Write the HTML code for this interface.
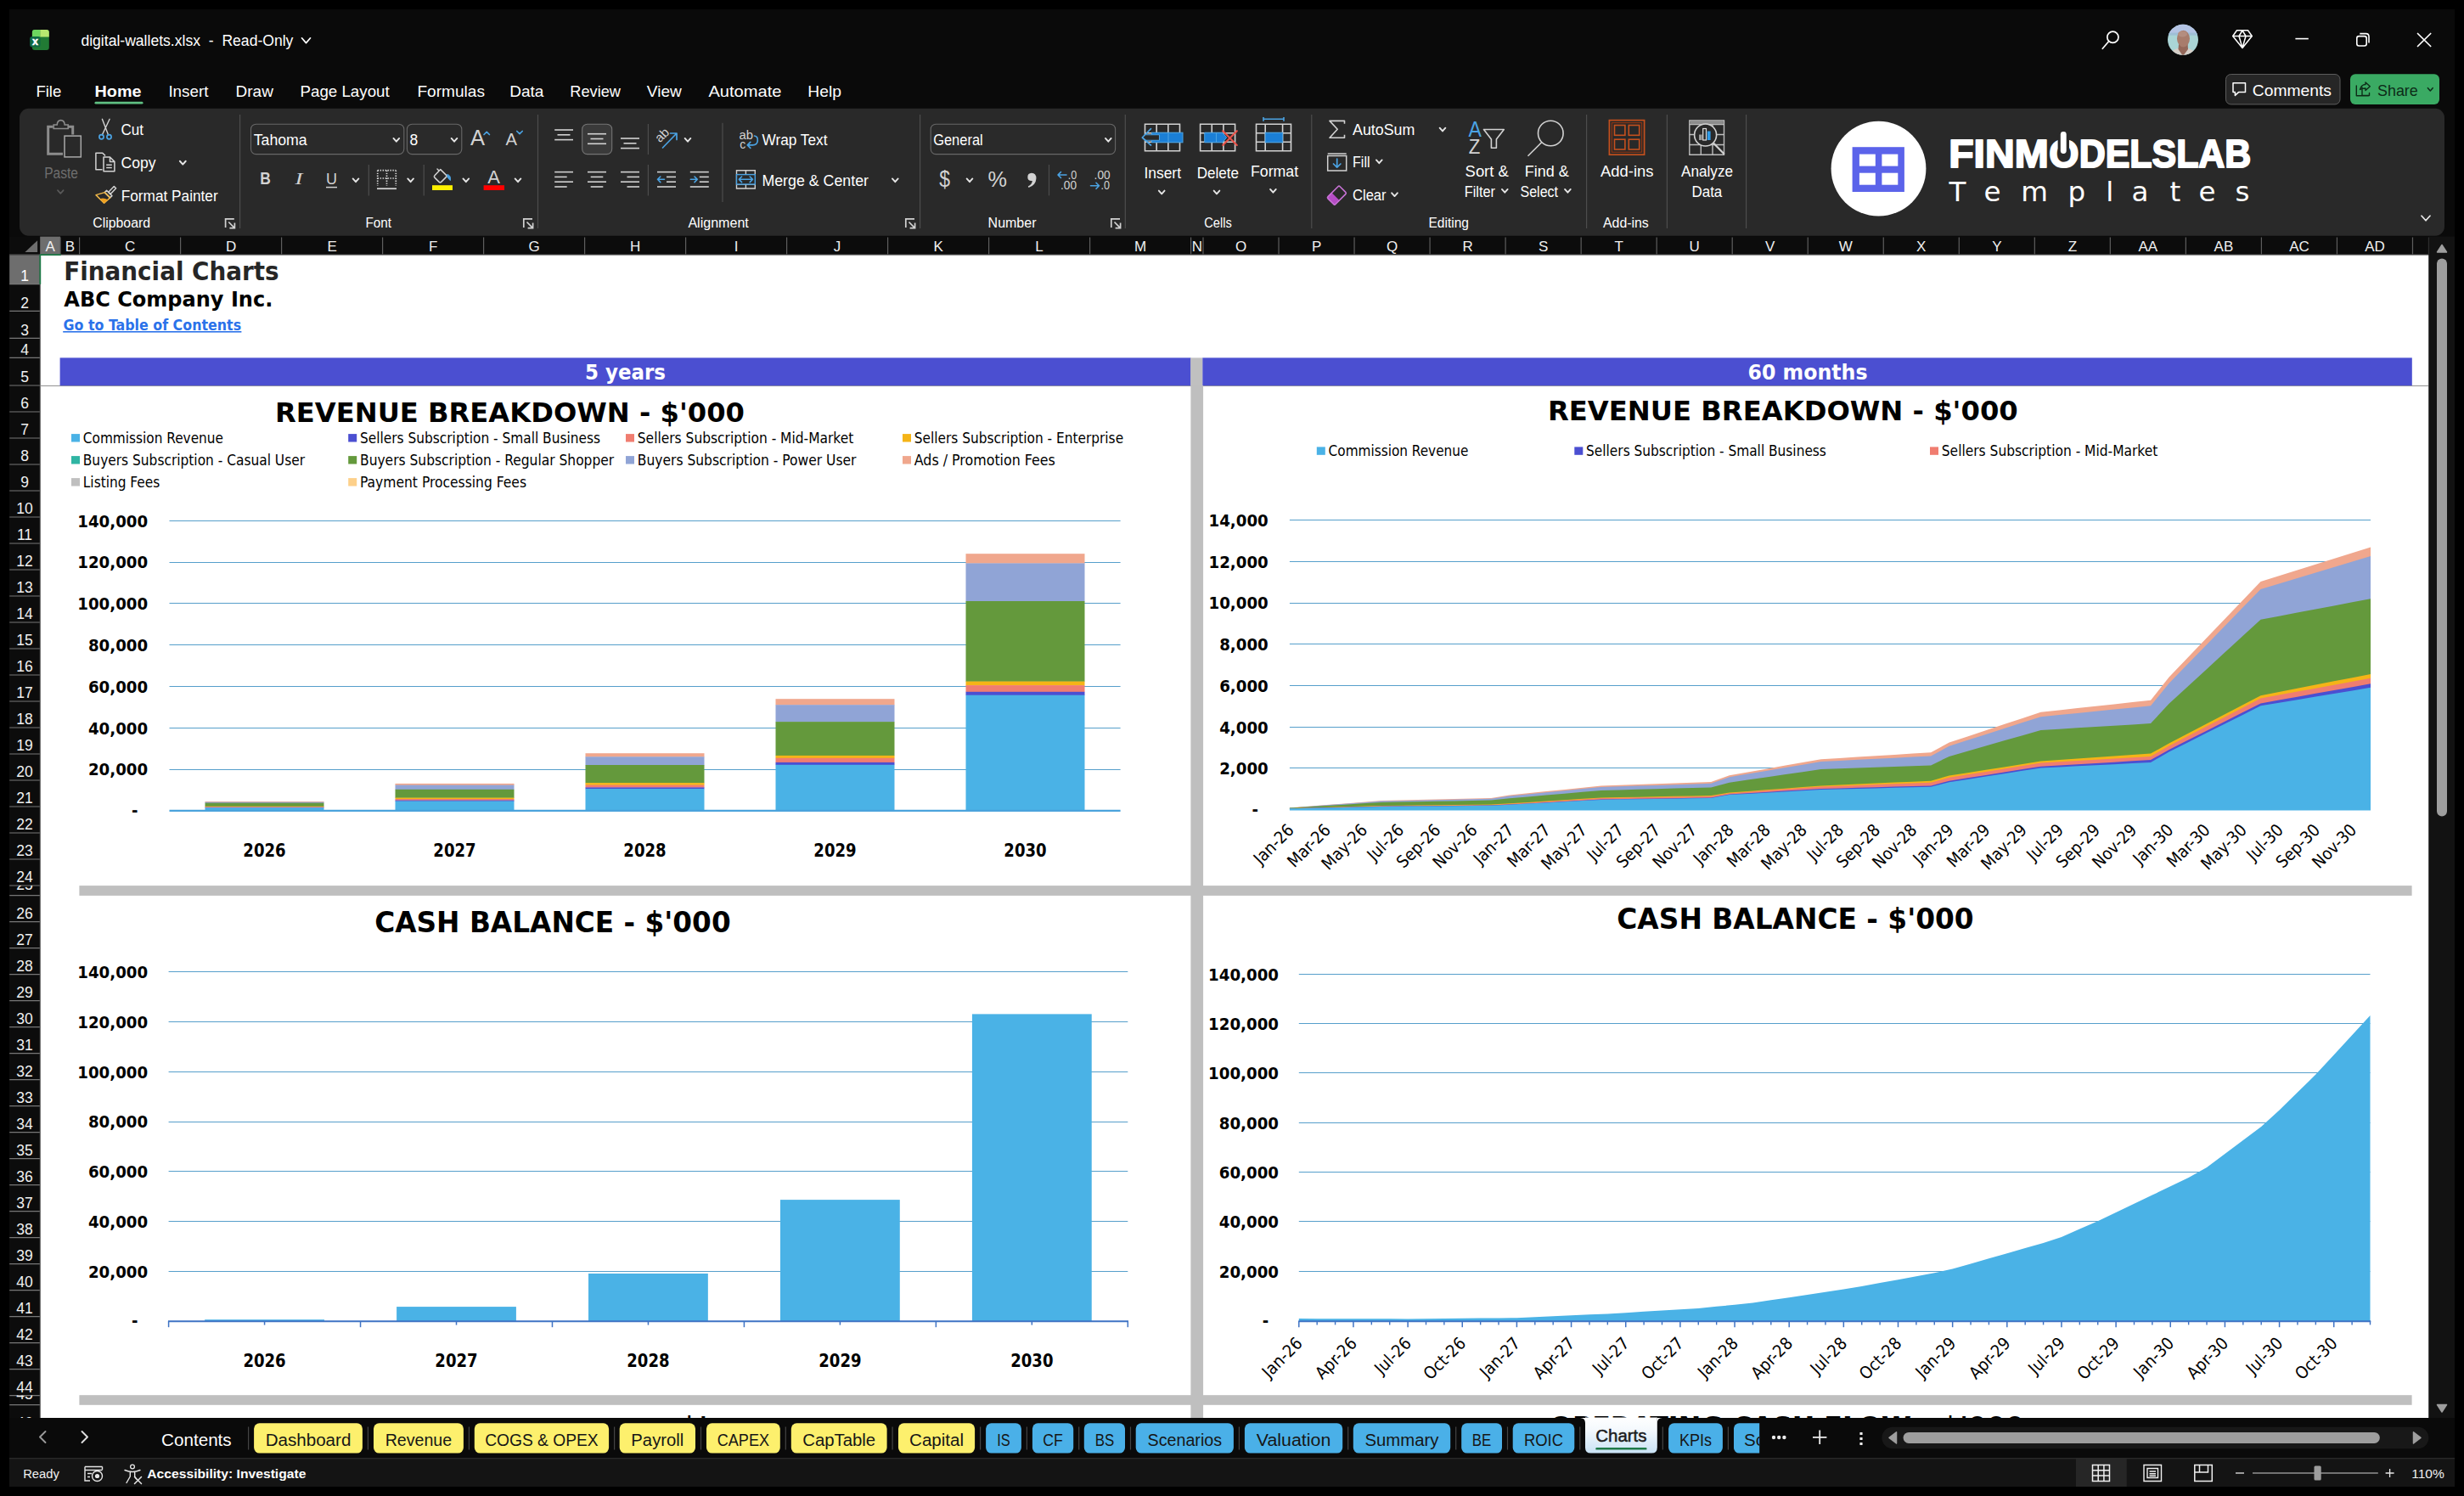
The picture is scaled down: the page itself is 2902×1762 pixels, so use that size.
<!DOCTYPE html>
<html lang="en"><head><meta charset="utf-8"><title>digital-wallets.xlsx - Excel</title>
<style>
html,body{margin:0;padding:0;background:#000;overflow:hidden}
body{width:2902px;height:1762px;font-family:'Liberation Sans', sans-serif}
svg{display:block;position:absolute;left:0;top:0}
text{white-space:pre}
</style></head><body>
<svg width="2902" height="1762" viewBox="0 0 2902 1762">
<rect x="0" y="0" width="2902" height="1762" fill="#000" />
<rect x="11" y="11" width="2880" height="1740" fill="#0a0a0a" />
<g id="titlebar">
<g id="xlicon">
<rect x="37.9" y="34.9" width="19.9" height="24.1" fill="#217a34" rx="3" />
<path d="M40.9 34.9 H47.3 V43.4 H37.9 V37.9 Q37.9 34.9 40.9 34.9 Z" fill="#6dd65f" />
<path d="M47.3 34.9 H54.8 Q57.8 34.9 57.8 37.9 V43.4 H47.3 Z" fill="#b8e870" />
<rect x="35.2" y="43" width="12.4" height="12.4" fill="#0e6a44" rx="2.6" />
<text x="41.4" y="53.2" font-size="12.5" fill="#fff" font-family="'Liberation Sans', sans-serif" font-weight="bold" text-anchor="middle" stroke="#fff" stroke-width="0.5">x</text>
</g>
<text x="95.4" y="53.8" font-size="18" fill="#fff" font-family="'Liberation Sans', sans-serif" textLength="250" lengthAdjust="spacingAndGlyphs" >digital-wallets.xlsx  -  Read-Only</text>
<path d="M355.46 44.81 L360.5 50.59 L365.54 44.81" fill="none" stroke="#fff" stroke-width="1.7" stroke-linecap="round" stroke-linejoin="round"/>
<circle cx="2488.4" cy="43.8" r="6.6" fill="none" stroke="#fff" stroke-width="1.7"/>
<line x1="2483.6" y1="48.8" x2="2476.3" y2="57.3" stroke="#fff" stroke-width="1.7" stroke-linecap="round"/>
<defs><clipPath id="av"><circle cx="2571" cy="46.8" r="18"/></clipPath></defs>
<g clip-path="url(#av)">
<rect x="2552" y="28" width="38" height="38" fill="#aad5d6" />
<rect x="2552" y="28" width="38" height="12.8" fill="#b4c4e4" />
<rect x="2552" y="38.6" width="38" height="3" fill="#9fbfd6" />
<ellipse cx="2571" cy="67.5" rx="16" ry="11.5" fill="#d6cfc8"/>
<path d="M2566 52 L2565.5 58 L2571 66 L2577 58 L2576.6 52 Z" fill="#94685a" />
<ellipse cx="2571.5" cy="45.6" rx="7.5" ry="9.8" fill="#a87c6c"/>
<ellipse cx="2570.5" cy="40" rx="5.5" ry="3.6" fill="#b48d7f"/>
</g>
<path d="M2634.5 35.8 H2647.5 L2652.3 42.5 L2641 56.5 L2629.7 42.5 Z M2629.7 42.5 H2652.3 M2637 42.5 L2641 35.8 L2645 42.5 L2641 56.5 Z" fill="none" stroke="#fff" stroke-width="1.5" stroke-linejoin="round"/>
<line x1="2703.4" y1="45.6" x2="2718.8" y2="45.6" stroke="#fff" stroke-width="1.6" />
<rect x="2775.8" y="42.6" width="11.4" height="11.4" fill="none" rx="2.5" stroke="#fff" stroke-width="1.6" />
<path d="M2779.3 39.6 H2786.5 Q2790 39.6 2790 43.1 V50.4" fill="none" stroke="#fff" stroke-width="1.6" />
<path d="M2847.5 39.5 L2862.7 54.5 M2862.7 39.5 L2847.5 54.5" fill="none" stroke="#fff" stroke-width="1.7" stroke-linecap="round"/>
</g>
<g id="tabs">
<text x="42.4" y="113.5" font-size="19" fill="#fff" font-family="'Liberation Sans', sans-serif" textLength="29.9" lengthAdjust="spacingAndGlyphs" >File</text>
<text x="198.4" y="113.5" font-size="19" fill="#fff" font-family="'Liberation Sans', sans-serif" textLength="47" lengthAdjust="spacingAndGlyphs" >Insert</text>
<text x="277.6" y="113.5" font-size="19" fill="#fff" font-family="'Liberation Sans', sans-serif" textLength="44.3" lengthAdjust="spacingAndGlyphs" >Draw</text>
<text x="353.5" y="113.5" font-size="19" fill="#fff" font-family="'Liberation Sans', sans-serif" textLength="105.2" lengthAdjust="spacingAndGlyphs" >Page Layout</text>
<text x="491.4" y="113.5" font-size="19" fill="#fff" font-family="'Liberation Sans', sans-serif" textLength="79.6" lengthAdjust="spacingAndGlyphs" >Formulas</text>
<text x="600.2" y="113.5" font-size="19" fill="#fff" font-family="'Liberation Sans', sans-serif" textLength="40.2" lengthAdjust="spacingAndGlyphs" >Data</text>
<text x="671.3" y="113.5" font-size="19" fill="#fff" font-family="'Liberation Sans', sans-serif" textLength="59.7" lengthAdjust="spacingAndGlyphs" >Review</text>
<text x="761.8" y="113.5" font-size="19" fill="#fff" font-family="'Liberation Sans', sans-serif" textLength="41" lengthAdjust="spacingAndGlyphs" >View</text>
<text x="834.4" y="113.5" font-size="19" fill="#fff" font-family="'Liberation Sans', sans-serif" textLength="86.1" lengthAdjust="spacingAndGlyphs" >Automate</text>
<text x="951.3" y="113.5" font-size="19" fill="#fff" font-family="'Liberation Sans', sans-serif" textLength="39.7" lengthAdjust="spacingAndGlyphs" >Help</text>
<text x="111.5" y="113.5" font-size="19" fill="#fff" font-family="'Liberation Sans', sans-serif" font-weight="bold" textLength="55" lengthAdjust="spacingAndGlyphs" >Home</text>
<rect x="111.5" y="119.8" width="57" height="2.8" fill="#5fbf82" rx="1.4" />
<rect x="2621.5" y="87.5" width="134.5" height="35.4" fill="#262626" rx="6" stroke="#5c5c5c" stroke-width="1" />
<path d="M2630 97.8 H2644.5 V108.6 H2636.5 L2632.4 112.4 V108.6 H2630 Z" fill="none" stroke="#fff" stroke-width="1.5" stroke-linejoin="round"/>
<text x="2652.8" y="112.8" font-size="19" fill="#fff" font-family="'Liberation Sans', sans-serif" textLength="93.2" lengthAdjust="spacingAndGlyphs" >Comments</text>
<rect x="2768" y="87.3" width="105" height="35.6" fill="#3aaa63" rx="6" />
<path d="M2782 103 V112.5 H2790.5 V109.5 M2779.5 105.5 Q2781 99.5 2786 99.5 V97 L2791.3 101.8 L2786 106.6 V104 Q2782 104 2779.5 105.5 Z M2775.3 101 V112.7 H2789.5" fill="none" stroke="#0d2b17" stroke-width="1.4" stroke-linejoin="round" stroke-linecap="round"/>
<text x="2800" y="112.8" font-size="19" fill="#0d2b17" font-family="'Liberation Sans', sans-serif" textLength="47.8" lengthAdjust="spacingAndGlyphs" >Share</text>
<path d="M2859.42 103.66 L2862.3 106.94 L2865.18 103.66" fill="none" stroke="#0d2b17" stroke-width="1.5" stroke-linecap="round" stroke-linejoin="round"/>
</g>
<g id="ribbon">
<rect x="23" y="127.8" width="2856" height="150" fill="#292929" rx="11" />
<path d="M62.5 149.3 H56.7 V181.3 H74 M80.8 149.3 H85.7 V158.5" fill="none" stroke="#8c8c8c" stroke-width="3" />
<path d="M63.2 151.5 V147 H67.2 Q67.6 141.6 71.7 141.6 Q75.8 141.6 76.2 147 H80.2 V151.5 Z" fill="none" stroke="#8c8c8c" stroke-width="1.6" />
<rect x="76" y="160.1" width="19.3" height="24.8" fill="none" stroke="#a8a8a8" stroke-width="1.5" />
<text x="52.2" y="209.6" font-size="17.5" fill="#6e6e6e" font-family="'Liberation Sans', sans-serif" textLength="39.8" lengthAdjust="spacingAndGlyphs" >Paste</text>
<path d="M67.94 224.13 L71.3 227.87 L74.66 224.13" fill="none" stroke="#5a5a5a" stroke-width="1.6" stroke-linecap="round" stroke-linejoin="round"/>
<path d="M120.4 140.3 L127.6 159 M129.1 140.3 L120.3 159" fill="none" stroke="#d2d2d2" stroke-width="1.4" stroke-linecap="round"/>
<circle cx="119.5" cy="161.2" r="2.6" fill="none" stroke="#4ba3e3" stroke-width="1.7"/><circle cx="128.5" cy="161.2" r="2.6" fill="none" stroke="#4ba3e3" stroke-width="1.7"/>
<text x="142.5" y="158.6" font-size="17.5" fill="#fff" font-family="'Liberation Sans', sans-serif" textLength="26.5" lengthAdjust="spacingAndGlyphs" >Cut</text>
<path d="M120.5 199.8 H112.9 V180.2 H120.8 L124 183.4" fill="none" stroke="#d2d2d2" stroke-width="1.5" stroke-linejoin="round"/>
<path d="M122 185 H129.5 L134.9 190.4 V201.8 H122 Z M129.5 185 V190.4 H134.9 M125.2 194.3 H131.8 M125.2 197.6 H131.8" fill="none" stroke="#d2d2d2" stroke-width="1.5" stroke-linejoin="round"/>
<text x="142.5" y="197.6" font-size="17.5" fill="#fff" font-family="'Liberation Sans', sans-serif" textLength="41" lengthAdjust="spacingAndGlyphs" >Copy</text>
<path d="M211.86 189.75 L215.3 193.65 L218.74 189.75" fill="none" stroke="#e6e6e6" stroke-width="1.9" stroke-linecap="round" stroke-linejoin="round"/>
<path d="M134.3 219.5 L127.8 226.2 L130.2 228.6 L136.6 221.8 Z" fill="none" stroke="#d2d2d2" stroke-width="1.5" stroke-linejoin="round"/>
<path d="M125.6 224.3 L131.9 230.6 L129.6 232.9 L123.3 226.6 Z" fill="none" stroke="#d2d2d2" stroke-width="1.5" stroke-linejoin="round"/>
<path d="M123.3 226.6 L113 229.6 L122.6 239.2 L129.6 232.9 Z" fill="none" stroke="#f0b849" stroke-width="1.5" stroke-linejoin="round"/>
<path d="M117.8 234.2 L122.6 239.2 L127 235.2 Q122 232.5 117.8 234.2 Z" fill="#f0a020" />
<text x="142.7" y="236.6" font-size="17.5" fill="#fff" font-family="'Liberation Sans', sans-serif" textLength="114" lengthAdjust="spacingAndGlyphs" >Format Painter</text>
<text x="109.3" y="267.8" font-size="16" fill="#fff" font-family="'Liberation Sans', sans-serif" textLength="67.7" lengthAdjust="spacingAndGlyphs" >Clipboard</text>
<path d="M265.6 268 V257.8 H275.8" fill="none" stroke="#d2d2d2" stroke-width="1.7" />
<path d="M269.3 261.5 L276.1 268.3 M276.4 262.6 V268.6 H270.4" fill="none" stroke="#d2d2d2" stroke-width="1.7" />
<line x1="282.6" y1="135" x2="282.6" y2="269" stroke="#4d4d4d" stroke-width="1.2" />
<rect x="295.5" y="146.2" width="180.3" height="35.4" fill="#2a2a2a" rx="6" stroke="#686868" stroke-width="1.1" />
<text x="298.7" y="170.6" font-size="17.5" fill="#fff" font-family="'Liberation Sans', sans-serif" textLength="63" lengthAdjust="spacingAndGlyphs" >Tahoma</text>
<path d="M463.44 162.93 L466.8 166.67 L470.16 162.93" fill="none" stroke="#e6e6e6" stroke-width="1.9" stroke-linecap="round" stroke-linejoin="round"/>
<rect x="479.4" y="146.2" width="64.4" height="35.4" fill="#2a2a2a" rx="6" stroke="#686868" stroke-width="1.1" />
<text x="482.6" y="170.6" font-size="17.5" fill="#fff" font-family="'Liberation Sans', sans-serif" >8</text>
<path d="M531.64 162.93 L535 166.67 L538.36 162.93" fill="none" stroke="#e6e6e6" stroke-width="1.9" stroke-linecap="round" stroke-linejoin="round"/>
<text x="554" y="171" font-size="26" fill="#d2d2d2" font-family="'Liberation Sans', sans-serif" textLength="17" lengthAdjust="spacingAndGlyphs" >A</text>
<path d="M570 158.5 L573.2 155.3 L576.4 158.5" fill="none" stroke="#4ba3e3" stroke-width="1.7" stroke-linecap="round" stroke-linejoin="round"/>
<text x="595.5" y="171" font-size="20.5" fill="#d2d2d2" font-family="'Liberation Sans', sans-serif" textLength="13.5" lengthAdjust="spacingAndGlyphs" >A</text>
<path d="M608.8 154.5 L612 157.7 L615.2 154.5" fill="none" stroke="#4ba3e3" stroke-width="1.7" stroke-linecap="round" stroke-linejoin="round"/>
<text x="306.3" y="217.4" font-size="19.5" fill="#d2d2d2" font-family="'Liberation Sans', sans-serif" font-weight="bold" textLength="12.6" lengthAdjust="spacingAndGlyphs" >B</text>
<text x="347.5" y="217.4" font-size="19.5" fill="#d2d2d2" font-family="'Liberation Serif', serif" textLength="9" lengthAdjust="spacingAndGlyphs" font-style="italic">I</text>
<text x="384" y="216.5" font-size="18.5" fill="#d2d2d2" font-family="'Liberation Sans', sans-serif" textLength="13" lengthAdjust="spacingAndGlyphs" >U</text>
<line x1="384" y1="220.6" x2="397" y2="220.6" stroke="#d2d2d2" stroke-width="1.5" />
<path d="M415.64 210.43 L419 214.17 L422.36 210.43" fill="none" stroke="#e6e6e6" stroke-width="1.9" stroke-linecap="round" stroke-linejoin="round"/>
<line x1="434.3" y1="194" x2="434.3" y2="230.4" stroke="#4d4d4d" stroke-width="1.2" />
<path d="M444.7 200.7 H466.3 M444.7 200.7 V219 M466.3 200.7 V219 M455.5 200.7 V219 M444.7 210 H466.3" fill="none" stroke="#dcdcdc" stroke-width="1.7" stroke-dasharray="1.4 1.55"/>
<line x1="444" y1="222.2" x2="467" y2="222.2" stroke="#d2d2d2" stroke-width="1.8" />
<path d="M480.24 210.43 L483.6 214.17 L486.96 210.43" fill="none" stroke="#e6e6e6" stroke-width="1.9" stroke-linecap="round" stroke-linejoin="round"/>
<line x1="499.2" y1="194" x2="499.2" y2="230.4" stroke="#4d4d4d" stroke-width="1.2" />
<path d="M518.8 199.6 L526.6 207.4 L519.6 214.4 Q518.4 215.6 517.2 214.4 L511.9 209.1 Q510.7 207.9 511.9 206.7 Z M517.2 201.2 L515 199" fill="none" stroke="#d2d2d2" stroke-width="1.5" stroke-linejoin="round" stroke-linecap="round"/>
<path d="M526.3 205.5 Q531.5 206 530.3 212.6 Q527.5 210 526.6 207.4" fill="#4ba3e3" stroke="#4ba3e3" stroke-width="1" />
<rect x="509" y="218.2" width="24" height="5.8" fill="#fff100" />
<path d="M545.44 210.43 L548.8 214.17 L552.16 210.43" fill="none" stroke="#e6e6e6" stroke-width="1.9" stroke-linecap="round" stroke-linejoin="round"/>
<text x="581.5" y="216" font-size="22" fill="#d2d2d2" font-family="'Liberation Sans', sans-serif" text-anchor="middle" >A</text>
<rect x="569.6" y="218.2" width="24.4" height="5.8" fill="#ff0000" />
<path d="M606.64 210.43 L610 214.17 L613.36 210.43" fill="none" stroke="#e6e6e6" stroke-width="1.9" stroke-linecap="round" stroke-linejoin="round"/>
<text x="430.4" y="267.8" font-size="16" fill="#fff" font-family="'Liberation Sans', sans-serif" textLength="30.6" lengthAdjust="spacingAndGlyphs" >Font</text>
<path d="M616.8 268 V257.8 H627" fill="none" stroke="#d2d2d2" stroke-width="1.7" />
<path d="M620.5 261.5 L627.3 268.3 M627.6 262.6 V268.6 H621.6" fill="none" stroke="#d2d2d2" stroke-width="1.7" />
<line x1="633.5" y1="135" x2="633.5" y2="269" stroke="#4d4d4d" stroke-width="1.2" />
<line x1="653.2" y1="153" x2="675" y2="153" stroke="#d2d2d2" stroke-width="1.6" />
<line x1="656.5" y1="158.8" x2="671.5" y2="158.8" stroke="#d2d2d2" stroke-width="1.6" />
<line x1="653.2" y1="164.6" x2="675" y2="164.6" stroke="#d2d2d2" stroke-width="1.6" />
<rect x="685.7" y="146.2" width="35" height="35.4" fill="#3a3a3a" rx="6" stroke="#757575" stroke-width="1.1" />
<line x1="692" y1="157.7" x2="714" y2="157.7" stroke="#d2d2d2" stroke-width="1.6" />
<line x1="695.5" y1="163.5" x2="710.5" y2="163.5" stroke="#d2d2d2" stroke-width="1.6" />
<line x1="692" y1="169.3" x2="714" y2="169.3" stroke="#d2d2d2" stroke-width="1.6" />
<line x1="731" y1="163" x2="753" y2="163" stroke="#d2d2d2" stroke-width="1.6" />
<line x1="734.5" y1="168.8" x2="749.5" y2="168.8" stroke="#d2d2d2" stroke-width="1.6" />
<line x1="731" y1="174.6" x2="753" y2="174.6" stroke="#d2d2d2" stroke-width="1.6" />
<line x1="763.4" y1="146" x2="763.4" y2="182" stroke="#4d4d4d" stroke-width="1.2" />
<text x="0" y="0" font-size="15" fill="#d2d2d2" font-family="'Liberation Sans', sans-serif" transform="translate(777.3,168.6) rotate(-45)">ab</text>
<path d="M780.5 174 L796.5 157.5 M789.5 157 H797 V164.5" fill="none" stroke="#4ba3e3" stroke-width="1.7" stroke-linecap="round" stroke-linejoin="round"/>
<path d="M806.64 162.93 L810 166.67 L813.36 162.93" fill="none" stroke="#e6e6e6" stroke-width="1.9" stroke-linecap="round" stroke-linejoin="round"/>
<line x1="653.2" y1="202.6" x2="675" y2="202.6" stroke="#d2d2d2" stroke-width="1.6" />
<line x1="653.2" y1="208.4" x2="667.7" y2="208.4" stroke="#d2d2d2" stroke-width="1.6" />
<line x1="653.2" y1="214.2" x2="675" y2="214.2" stroke="#d2d2d2" stroke-width="1.6" />
<line x1="653.2" y1="220" x2="667.7" y2="220" stroke="#d2d2d2" stroke-width="1.6" />
<line x1="692" y1="202.6" x2="714" y2="202.6" stroke="#d2d2d2" stroke-width="1.6" />
<line x1="695.7" y1="208.4" x2="710.3" y2="208.4" stroke="#d2d2d2" stroke-width="1.6" />
<line x1="692" y1="214.2" x2="714" y2="214.2" stroke="#d2d2d2" stroke-width="1.6" />
<line x1="695.7" y1="220" x2="710.3" y2="220" stroke="#d2d2d2" stroke-width="1.6" />
<line x1="731" y1="202.6" x2="753" y2="202.6" stroke="#d2d2d2" stroke-width="1.6" />
<line x1="738.5" y1="208.4" x2="753" y2="208.4" stroke="#d2d2d2" stroke-width="1.6" />
<line x1="731" y1="214.2" x2="753" y2="214.2" stroke="#d2d2d2" stroke-width="1.6" />
<line x1="738.5" y1="220" x2="753" y2="220" stroke="#d2d2d2" stroke-width="1.6" />
<line x1="763.4" y1="194" x2="763.4" y2="230.4" stroke="#4d4d4d" stroke-width="1.2" />
<line x1="774" y1="202.6" x2="796" y2="202.6" stroke="#d2d2d2" stroke-width="1.6" />
<line x1="774" y1="220" x2="796" y2="220" stroke="#d2d2d2" stroke-width="1.6" />
<line x1="785" y1="208.4" x2="796" y2="208.4" stroke="#d2d2d2" stroke-width="1.6" />
<line x1="785" y1="214.2" x2="796" y2="214.2" stroke="#d2d2d2" stroke-width="1.6" />
<path d="M782.5 211.3 H774.5 M777.8 208 L774.5 211.3 L777.8 214.6" fill="none" stroke="#4ba3e3" stroke-width="1.6" stroke-linecap="round" stroke-linejoin="round"/>
<line x1="812.8" y1="202.6" x2="834.8" y2="202.6" stroke="#d2d2d2" stroke-width="1.6" />
<line x1="812.8" y1="220" x2="834.8" y2="220" stroke="#d2d2d2" stroke-width="1.6" />
<line x1="823.8" y1="208.4" x2="834.8" y2="208.4" stroke="#d2d2d2" stroke-width="1.6" />
<line x1="823.8" y1="214.2" x2="834.8" y2="214.2" stroke="#d2d2d2" stroke-width="1.6" />
<path d="M813.3 211.3 H821.3 M818 208 L821.3 211.3 L818 214.6" fill="none" stroke="#4ba3e3" stroke-width="1.6" stroke-linecap="round" stroke-linejoin="round"/>
<line x1="851" y1="144.7" x2="851" y2="238" stroke="#4d4d4d" stroke-width="1.2" />
<text x="870.6" y="164" font-size="14" fill="#d2d2d2" font-family="'Liberation Sans', sans-serif" textLength="16.5" lengthAdjust="spacingAndGlyphs" >ab</text>
<text x="871.2" y="174.5" font-size="14" fill="#d2d2d2" font-family="'Liberation Sans', sans-serif" >c</text>
<path d="M888.5 160 Q892.8 160.5 892.3 166 Q891.8 170.8 886.5 170.8 H880.5 M883.8 167.3 L880.3 170.8 L883.8 174.3" fill="none" stroke="#4ba3e3" stroke-width="1.7" stroke-linecap="round" stroke-linejoin="round"/>
<text x="897.4" y="170.6" font-size="17.5" fill="#fff" font-family="'Liberation Sans', sans-serif" textLength="77.1" lengthAdjust="spacingAndGlyphs" >Wrap Text</text>
<path d="M867.5 200.7 H889.3 V222 H867.5 Z M867.5 205.6 H889.3 M867.5 217 H889.3 M878.4 200.7 V205.6 M878.4 217 V222" fill="none" stroke="#d2d2d2" stroke-width="1.4" />
<rect x="867.5" y="205.6" width="21.8" height="11.4" fill="#292929" stroke="#4ba3e3" stroke-width="1.4" />
<path d="M870.3 211.3 H886.5 M873.6 208 L870.3 211.3 L873.6 214.6 M883.2 208 L886.5 211.3 L883.2 214.6" fill="none" stroke="#4ba3e3" stroke-width="1.6" stroke-linecap="round" stroke-linejoin="round"/>
<text x="897.4" y="218.7" font-size="17.5" fill="#fff" font-family="'Liberation Sans', sans-serif" textLength="125.6" lengthAdjust="spacingAndGlyphs" >Merge &amp; Center</text>
<path d="M1050.94 210.43 L1054.3 214.17 L1057.66 210.43" fill="none" stroke="#e6e6e6" stroke-width="1.9" stroke-linecap="round" stroke-linejoin="round"/>
<text x="810.4" y="267.8" font-size="16" fill="#fff" font-family="'Liberation Sans', sans-serif" textLength="71.4" lengthAdjust="spacingAndGlyphs" >Alignment</text>
<path d="M1066.8 268 V257.8 H1077" fill="none" stroke="#d2d2d2" stroke-width="1.7" />
<path d="M1070.5 261.5 L1077.3 268.3 M1077.6 262.6 V268.6 H1071.6" fill="none" stroke="#d2d2d2" stroke-width="1.7" />
<line x1="1083.6" y1="135" x2="1083.6" y2="269" stroke="#4d4d4d" stroke-width="1.2" />
<rect x="1096.2" y="146.2" width="217.4" height="35.4" fill="#2a2a2a" rx="6" stroke="#686868" stroke-width="1.1" />
<text x="1099.2" y="170.6" font-size="17.5" fill="#fff" font-family="'Liberation Sans', sans-serif" textLength="58.5" lengthAdjust="spacingAndGlyphs" >General</text>
<path d="M1301.94 162.93 L1305.3 166.67 L1308.66 162.93" fill="none" stroke="#e6e6e6" stroke-width="1.9" stroke-linecap="round" stroke-linejoin="round"/>
<text x="1106.2" y="220.4" font-size="28" fill="#d2d2d2" font-family="'Liberation Sans', sans-serif" textLength="12.8" lengthAdjust="spacingAndGlyphs" >$</text>
<path d="M1138.64 210.43 L1142 214.17 L1145.36 210.43" fill="none" stroke="#e6e6e6" stroke-width="1.9" stroke-linecap="round" stroke-linejoin="round"/>
<text x="1174.8" y="219.5" font-size="25" fill="#d2d2d2" font-family="'Liberation Sans', sans-serif" text-anchor="middle" textLength="22.5" lengthAdjust="spacingAndGlyphs" >%</text>
<path d="M1215 203.8 Q1220.6 203.8 1220.4 210.5 Q1220 218 1211.5 221 L1210.8 219.6 Q1215.5 217.2 1215.8 213 Q1210.5 213.5 1210.3 208.7 Q1210.3 204 1215 203.8 Z" fill="#d2d2d2" />
<line x1="1235.5" y1="194" x2="1235.5" y2="230.4" stroke="#4d4d4d" stroke-width="1.2" />
<path d="M1246 206 H1256 M1249.5 202.5 L1246 206 L1249.5 209.5" fill="none" stroke="#4ba3e3" stroke-width="1.6" stroke-linecap="round" stroke-linejoin="round"/>
<text x="1257.8" y="210.5" font-size="14.5" fill="#d2d2d2" font-family="'Liberation Sans', sans-serif" textLength="10.5" lengthAdjust="spacingAndGlyphs" >.0</text>
<text x="1249" y="223.4" font-size="14.5" fill="#d2d2d2" font-family="'Liberation Sans', sans-serif" textLength="19" lengthAdjust="spacingAndGlyphs" >.00</text>
<text x="1288.6" y="210.5" font-size="14.5" fill="#d2d2d2" font-family="'Liberation Sans', sans-serif" textLength="19" lengthAdjust="spacingAndGlyphs" >.00</text>
<path d="M1284.5 218.8 H1294.5 M1291 215.3 L1294.5 218.8 L1291 222.3" fill="none" stroke="#4ba3e3" stroke-width="1.6" stroke-linecap="round" stroke-linejoin="round"/>
<text x="1296.6" y="223.4" font-size="14.5" fill="#d2d2d2" font-family="'Liberation Sans', sans-serif" textLength="10.5" lengthAdjust="spacingAndGlyphs" >.0</text>
<text x="1163.6" y="267.8" font-size="16" fill="#fff" font-family="'Liberation Sans', sans-serif" textLength="56.9" lengthAdjust="spacingAndGlyphs" >Number</text>
<path d="M1308.8 268 V257.8 H1319" fill="none" stroke="#d2d2d2" stroke-width="1.7" />
<path d="M1312.5 261.5 L1319.3 268.3 M1319.6 262.6 V268.6 H1313.6" fill="none" stroke="#d2d2d2" stroke-width="1.7" />
<line x1="1325.3" y1="135" x2="1325.3" y2="269" stroke="#4d4d4d" stroke-width="1.2" />
<path d="M1348.5 146.3 H1389.5 V177.8 H1348.5 Z M1348.5 156.8 H1389.5 M1348.5 167.3 H1389.5 M1362.17 146.3 V177.8 M1375.83 146.3 V177.8" fill="none" stroke="#d2d2d2" stroke-width="1.6" />
<rect x="1356.5" y="156.2" width="36.5" height="11.6" fill="#1b7fd6" stroke="#4ba3e3" stroke-width="1" />
<rect x="1346" y="158.8" width="19.5" height="6.4" fill="#292929" />
<path d="M1365.5 158.8 H1349.5 M1365.5 165.2 H1349.5 M1365.5 158.8 V165.2 M1376 156.2 V167.8" fill="none" stroke="#4ba3e3" stroke-width="1.1" />
<path d="M1355.5 151.6 L1345.3 162 L1355.5 171" fill="none" stroke="#4ba3e3" stroke-width="1.7" stroke-linecap="round" stroke-linejoin="round"/>
<text x="1347.4" y="209.6" font-size="17.5" fill="#fff" font-family="'Liberation Sans', sans-serif" textLength="43.6" lengthAdjust="spacingAndGlyphs" >Insert</text>
<path d="M1364.84 224.63 L1368.2 228.37 L1371.56 224.63" fill="none" stroke="#e6e6e6" stroke-width="1.9" stroke-linecap="round" stroke-linejoin="round"/>
<path d="M1413.6 146.3 H1454.6 V177.8 H1413.6 Z M1413.6 156.8 H1454.6 M1413.6 167.3 H1454.6 M1427.27 146.3 V177.8 M1440.93 146.3 V177.8" fill="none" stroke="#d2d2d2" stroke-width="1.6" />
<path d="M1418.7 156.2 H1440 L1444.6 162 L1440 167.8 H1418.7 Z" fill="#1b7fd6" stroke="#4ba3e3" stroke-width="1" />
<path d="M1432.5 156.2 V167.8" fill="none" stroke="#4ba3e3" stroke-width="1.1" />
<path d="M1440.2 154.2 L1456.8 171 M1456.8 154.2 L1440.2 171" fill="none" stroke="#e8534a" stroke-width="2.1" stroke-linecap="round"/>
<text x="1409.7" y="209.6" font-size="17.5" fill="#fff" font-family="'Liberation Sans', sans-serif" textLength="49.3" lengthAdjust="spacingAndGlyphs" >Delete</text>
<path d="M1429.64 224.63 L1433 228.37 L1436.36 224.63" fill="none" stroke="#e6e6e6" stroke-width="1.9" stroke-linecap="round" stroke-linejoin="round"/>
<path d="M1479.5 146.3 H1520.5 V177.8 H1479.5 Z M1479.5 156.8 H1520.5 M1479.5 167.3 H1520.5 M1490.2 146.3 V177.8 M1510.6 146.3 V177.8" fill="none" stroke="#d2d2d2" stroke-width="1.6" />
<rect x="1490.2" y="156.2" width="20.4" height="11.6" fill="#1b7fd6" stroke="#4ba3e3" stroke-width="1" />
<path d="M1488 140.3 H1512 M1488 137.9 V142.7 M1512 137.9 V142.7" fill="none" stroke="#4ba3e3" stroke-width="1.6" />
<text x="1472.9" y="207.8" font-size="17.5" fill="#fff" font-family="'Liberation Sans', sans-serif" textLength="56.3" lengthAdjust="spacingAndGlyphs" >Format</text>
<path d="M1496.04 222.93 L1499.4 226.67 L1502.76 222.93" fill="none" stroke="#e6e6e6" stroke-width="1.9" stroke-linecap="round" stroke-linejoin="round"/>
<text x="1418.3" y="267.8" font-size="16" fill="#fff" font-family="'Liberation Sans', sans-serif" textLength="32.5" lengthAdjust="spacingAndGlyphs" >Cells</text>
<line x1="1544.8" y1="135" x2="1544.8" y2="269" stroke="#4d4d4d" stroke-width="1.2" />
<path d="M1583.5 145.8 V142.4 H1566 L1575.2 152.3 L1566 162.2 H1583.5 V158.8" fill="none" stroke="#d2d2d2" stroke-width="1.6" stroke-linejoin="round"/>
<text x="1593" y="158.6" font-size="17.5" fill="#fff" font-family="'Liberation Sans', sans-serif" textLength="73.4" lengthAdjust="spacingAndGlyphs" >AutoSum</text>
<path d="M1695.64 150.73 L1699 154.47 L1702.36 150.73" fill="none" stroke="#e6e6e6" stroke-width="1.9" stroke-linecap="round" stroke-linejoin="round"/>
<path d="M1563.7 181 H1585.7 M1563.7 183.6 H1585.7 V201 H1563.7 Z" fill="none" stroke="#d2d2d2" stroke-width="1.5" />
<path d="M1574.7 187 V197 M1570.5 193 L1574.7 197.2 L1578.9 193" fill="none" stroke="#4ba3e3" stroke-width="1.7" stroke-linecap="round" stroke-linejoin="round"/>
<text x="1593" y="197.4" font-size="17.5" fill="#fff" font-family="'Liberation Sans', sans-serif" textLength="20.6" lengthAdjust="spacingAndGlyphs" >Fill</text>
<path d="M1620.94 188.43 L1624.3 192.17 L1627.66 188.43" fill="none" stroke="#e6e6e6" stroke-width="1.9" stroke-linecap="round" stroke-linejoin="round"/>
<g transform="translate(1574.4,230.1) rotate(-45)">
<rect x="-10" y="-6.3" width="8" height="12.6" fill="#b44cc4" rx="1" />
<rect x="-10" y="-6.3" width="20" height="12.6" fill="none" rx="1.6" stroke="#c873d6" stroke-width="1.6" />
</g>
<text x="1593" y="236.4" font-size="17.5" fill="#fff" font-family="'Liberation Sans', sans-serif" textLength="39.6" lengthAdjust="spacingAndGlyphs" >Clear</text>
<path d="M1639.14 227.33 L1642.5 231.07 L1645.86 227.33" fill="none" stroke="#e6e6e6" stroke-width="1.9" stroke-linecap="round" stroke-linejoin="round"/>
<text x="1729.6" y="160.6" font-size="26" fill="#4ba3e3" font-family="'Liberation Sans', sans-serif" textLength="15.4" lengthAdjust="spacingAndGlyphs" >A</text>
<text x="1729.8" y="181.2" font-size="24" fill="#d2d2d2" font-family="'Liberation Sans', sans-serif" textLength="13.6" lengthAdjust="spacingAndGlyphs" >Z</text>
<path d="M1747.5 152.5 H1771.3 L1762.4 164 V174.3 H1756.4 V164 Z" fill="none" stroke="#d2d2d2" stroke-width="1.6" stroke-linejoin="round"/>
<text x="1725.6" y="207.8" font-size="17.5" fill="#fff" font-family="'Liberation Sans', sans-serif" textLength="51.2" lengthAdjust="spacingAndGlyphs" >Sort &amp;</text>
<text x="1724.8" y="231.7" font-size="17.5" fill="#fff" font-family="'Liberation Sans', sans-serif" textLength="36.2" lengthAdjust="spacingAndGlyphs" >Filter</text>
<path d="M1768.94 222.93 L1772.3 226.67 L1775.66 222.93" fill="none" stroke="#e6e6e6" stroke-width="1.9" stroke-linecap="round" stroke-linejoin="round"/>
<circle cx="1826.3" cy="157" r="14.8" fill="none" stroke="#d2d2d2" stroke-width="1.6"/>
<line x1="1815.6" y1="167.7" x2="1799.5" y2="183.8" stroke="#d2d2d2" stroke-width="1.6" />
<text x="1795.7" y="207.8" font-size="17.5" fill="#fff" font-family="'Liberation Sans', sans-serif" textLength="52" lengthAdjust="spacingAndGlyphs" >Find &amp;</text>
<text x="1790.5" y="231.7" font-size="17.5" fill="#fff" font-family="'Liberation Sans', sans-serif" textLength="44.5" lengthAdjust="spacingAndGlyphs" >Select</text>
<path d="M1843.04 222.93 L1846.4 226.67 L1849.76 222.93" fill="none" stroke="#e6e6e6" stroke-width="1.9" stroke-linecap="round" stroke-linejoin="round"/>
<text x="1682.5" y="267.8" font-size="16" fill="#fff" font-family="'Liberation Sans', sans-serif" textLength="47.5" lengthAdjust="spacingAndGlyphs" >Editing</text>
<line x1="1868.6" y1="135" x2="1868.6" y2="269" stroke="#4d4d4d" stroke-width="1.2" />
<rect x="1895.4" y="141.6" width="41.2" height="40.6" fill="none" stroke="#c4501e" stroke-width="1.7" />
<rect x="1898.4" y="144.6" width="35.2" height="34.6" fill="none" stroke="#8a3413" stroke-width="1.2" />
<rect x="1901.5" y="147.5" width="12.4" height="11.8" fill="none" stroke="#c4501e" stroke-width="1.6" />
<rect x="1918.3" y="147.5" width="12.4" height="11.8" fill="none" stroke="#c4501e" stroke-width="1.6" />
<rect x="1901.5" y="164.2" width="12.4" height="11.8" fill="none" stroke="#c4501e" stroke-width="1.6" />
<rect x="1918.3" y="164.2" width="12.4" height="11.8" fill="none" stroke="#c4501e" stroke-width="1.6" />
<text x="1885" y="207.8" font-size="17.5" fill="#fff" font-family="'Liberation Sans', sans-serif" textLength="62.5" lengthAdjust="spacingAndGlyphs" >Add-ins</text>
<text x="1888" y="267.8" font-size="16" fill="#fff" font-family="'Liberation Sans', sans-serif" textLength="53.8" lengthAdjust="spacingAndGlyphs" >Add-ins</text>
<line x1="1963.4" y1="135" x2="1963.4" y2="269" stroke="#4d4d4d" stroke-width="1.2" />
<path d="M1989.8 142 H2030.5 V182.2 H1989.8 Z M1989.8 146.5 H2030.5 M1989.8 158.5 H2030.5 M1989.8 170.5 H2030.5 M2003.3 146.5 V182.2 M2017 146.5 V182.2" fill="none" stroke="#bdbdbd" stroke-width="1.4" />
<rect x="1990.5" y="142.7" width="39.3" height="3.4" fill="#8c8c8c" />
<circle cx="2008.6" cy="159" r="13" fill="#292929" stroke="#d2d2d2" stroke-width="1.6"/>
<line x1="2018" y1="168.4" x2="2030.8" y2="181.5" stroke="#d2d2d2" stroke-width="2.2" />
<rect x="2001" y="158.5" width="3.6" height="6.5" fill="#9a9a9a" />
<rect x="2005.7" y="151.5" width="3.8" height="13.5" fill="none" stroke="#e0e0e0" stroke-width="1.2" />
<rect x="2010.8" y="154.5" width="3.8" height="10.5" fill="#2f9be8" />
<text x="1980" y="207.8" font-size="17.5" fill="#fff" font-family="'Liberation Sans', sans-serif" textLength="61" lengthAdjust="spacingAndGlyphs" >Analyze</text>
<text x="1992.5" y="231.7" font-size="17.5" fill="#fff" font-family="'Liberation Sans', sans-serif" textLength="35.8" lengthAdjust="spacingAndGlyphs" >Data</text>
<line x1="2056.6" y1="135" x2="2056.6" y2="269" stroke="#4d4d4d" stroke-width="1.2" />
<circle cx="2212.5" cy="198.7" r="55.9" fill="#fff"/>
<rect x="2181.6" y="173.2" width="61.3" height="52.8" fill="#5b63ea" />
<rect x="2189.9" y="181.6" width="18.9" height="14" fill="#fff" />
<rect x="2216.4" y="181.6" width="18.9" height="14" fill="#fff" />
<rect x="2189.9" y="203.7" width="18.9" height="14" fill="#fff" />
<rect x="2216.4" y="203.7" width="18.9" height="14" fill="#fff" />
<text x="2295.2" y="196.6" font-size="46" fill="#fff" font-family="'Liberation Sans', sans-serif" font-weight="bold" textLength="117.5" lengthAdjust="spacingAndGlyphs" stroke="#fff" stroke-width="2" stroke-linejoin="round">FINM</text>
<text x="2413.2" y="196.6" font-size="46" fill="#fff" font-family="'Liberation Sans', sans-serif" font-weight="bold" textLength="35.2" lengthAdjust="spacingAndGlyphs" stroke="#fff" stroke-width="2" stroke-linejoin="round">O</text>
<text x="2448.8" y="196.6" font-size="46" fill="#fff" font-family="'Liberation Sans', sans-serif" font-weight="bold" textLength="202.5" lengthAdjust="spacingAndGlyphs" stroke="#fff" stroke-width="2" stroke-linejoin="round">DELSLAB</text>
<rect x="2423.6" y="159" width="13.4" height="22.5" fill="#292929" />
<rect x="2426.8" y="155" width="6.9" height="26" fill="#fff" rx="3.4" />
<text y="236.8" x="2295.6 2336.6 2380.2 2435.6 2480.2 2510.6 2555.6 2589.6 2632.6" font-size="32.6" fill="#fff" font-family="'DejaVu Sans', 'Liberation Sans', sans-serif">Templates</text>
<path d="M2852.04 254.19 L2857 259.81 L2861.96 254.19" fill="none" stroke="#e6e6e6" stroke-width="1.7" stroke-linecap="round" stroke-linejoin="round"/>
</g>
<g id="sheet">
<rect x="47" y="300" width="2813.5" height="1370" fill="#fff" />
<rect x="11" y="278.6" width="2880" height="21.6" fill="#0c0c0c" />
<rect x="11" y="300" width="36.2" height="1370" fill="#0c0c0c" />
<rect x="47.2" y="278.6" width="23.8" height="21.4" fill="#6e6e6e" />
<line x1="71" y1="279.5" x2="71" y2="299.5" stroke="#5e5e5e" stroke-width="1.2" />
<text x="59.1" y="295.9" font-size="17" fill="#f0f0f0" font-family="'Liberation Sans', sans-serif" text-anchor="middle" >A</text>
<line x1="93.6" y1="279.5" x2="93.6" y2="299.5" stroke="#5e5e5e" stroke-width="1.2" />
<text x="82.3" y="295.9" font-size="17" fill="#f0f0f0" font-family="'Liberation Sans', sans-serif" text-anchor="middle" >B</text>
<line x1="212.6" y1="279.5" x2="212.6" y2="299.5" stroke="#5e5e5e" stroke-width="1.2" />
<text x="153.1" y="295.9" font-size="17" fill="#f0f0f0" font-family="'Liberation Sans', sans-serif" text-anchor="middle" >C</text>
<line x1="331.6" y1="279.5" x2="331.6" y2="299.5" stroke="#5e5e5e" stroke-width="1.2" />
<text x="272.1" y="295.9" font-size="17" fill="#f0f0f0" font-family="'Liberation Sans', sans-serif" text-anchor="middle" >D</text>
<line x1="450.6" y1="279.5" x2="450.6" y2="299.5" stroke="#5e5e5e" stroke-width="1.2" />
<text x="391.1" y="295.9" font-size="17" fill="#f0f0f0" font-family="'Liberation Sans', sans-serif" text-anchor="middle" >E</text>
<line x1="569.6" y1="279.5" x2="569.6" y2="299.5" stroke="#5e5e5e" stroke-width="1.2" />
<text x="510.1" y="295.9" font-size="17" fill="#f0f0f0" font-family="'Liberation Sans', sans-serif" text-anchor="middle" >F</text>
<line x1="688.6" y1="279.5" x2="688.6" y2="299.5" stroke="#5e5e5e" stroke-width="1.2" />
<text x="629.1" y="295.9" font-size="17" fill="#f0f0f0" font-family="'Liberation Sans', sans-serif" text-anchor="middle" >G</text>
<line x1="807.6" y1="279.5" x2="807.6" y2="299.5" stroke="#5e5e5e" stroke-width="1.2" />
<text x="748.1" y="295.9" font-size="17" fill="#f0f0f0" font-family="'Liberation Sans', sans-serif" text-anchor="middle" >H</text>
<line x1="926.6" y1="279.5" x2="926.6" y2="299.5" stroke="#5e5e5e" stroke-width="1.2" />
<text x="867.1" y="295.9" font-size="17" fill="#f0f0f0" font-family="'Liberation Sans', sans-serif" text-anchor="middle" >I</text>
<line x1="1045.6" y1="279.5" x2="1045.6" y2="299.5" stroke="#5e5e5e" stroke-width="1.2" />
<text x="986.1" y="295.9" font-size="17" fill="#f0f0f0" font-family="'Liberation Sans', sans-serif" text-anchor="middle" >J</text>
<line x1="1164.6" y1="279.5" x2="1164.6" y2="299.5" stroke="#5e5e5e" stroke-width="1.2" />
<text x="1105.1" y="295.9" font-size="17" fill="#f0f0f0" font-family="'Liberation Sans', sans-serif" text-anchor="middle" >K</text>
<line x1="1283.6" y1="279.5" x2="1283.6" y2="299.5" stroke="#5e5e5e" stroke-width="1.2" />
<text x="1224.1" y="295.9" font-size="17" fill="#f0f0f0" font-family="'Liberation Sans', sans-serif" text-anchor="middle" >L</text>
<line x1="1402.6" y1="279.5" x2="1402.6" y2="299.5" stroke="#5e5e5e" stroke-width="1.2" />
<text x="1343.1" y="295.9" font-size="17" fill="#f0f0f0" font-family="'Liberation Sans', sans-serif" text-anchor="middle" >M</text>
<line x1="1417" y1="279.5" x2="1417" y2="299.5" stroke="#5e5e5e" stroke-width="1.2" />
<text x="1409.8" y="295.9" font-size="17" fill="#f0f0f0" font-family="'Liberation Sans', sans-serif" text-anchor="middle" >N</text>
<line x1="1506.03" y1="279.5" x2="1506.03" y2="299.5" stroke="#5e5e5e" stroke-width="1.2" />
<text x="1461.51" y="295.9" font-size="17" fill="#f0f0f0" font-family="'Liberation Sans', sans-serif" text-anchor="middle" >O</text>
<line x1="1595.06" y1="279.5" x2="1595.06" y2="299.5" stroke="#5e5e5e" stroke-width="1.2" />
<text x="1550.55" y="295.9" font-size="17" fill="#f0f0f0" font-family="'Liberation Sans', sans-serif" text-anchor="middle" >P</text>
<line x1="1684.09" y1="279.5" x2="1684.09" y2="299.5" stroke="#5e5e5e" stroke-width="1.2" />
<text x="1639.57" y="295.9" font-size="17" fill="#f0f0f0" font-family="'Liberation Sans', sans-serif" text-anchor="middle" >Q</text>
<line x1="1773.12" y1="279.5" x2="1773.12" y2="299.5" stroke="#5e5e5e" stroke-width="1.2" />
<text x="1728.61" y="295.9" font-size="17" fill="#f0f0f0" font-family="'Liberation Sans', sans-serif" text-anchor="middle" >R</text>
<line x1="1862.15" y1="279.5" x2="1862.15" y2="299.5" stroke="#5e5e5e" stroke-width="1.2" />
<text x="1817.63" y="295.9" font-size="17" fill="#f0f0f0" font-family="'Liberation Sans', sans-serif" text-anchor="middle" >S</text>
<line x1="1951.18" y1="279.5" x2="1951.18" y2="299.5" stroke="#5e5e5e" stroke-width="1.2" />
<text x="1906.66" y="295.9" font-size="17" fill="#f0f0f0" font-family="'Liberation Sans', sans-serif" text-anchor="middle" >T</text>
<line x1="2040.21" y1="279.5" x2="2040.21" y2="299.5" stroke="#5e5e5e" stroke-width="1.2" />
<text x="1995.69" y="295.9" font-size="17" fill="#f0f0f0" font-family="'Liberation Sans', sans-serif" text-anchor="middle" >U</text>
<line x1="2129.24" y1="279.5" x2="2129.24" y2="299.5" stroke="#5e5e5e" stroke-width="1.2" />
<text x="2084.72" y="295.9" font-size="17" fill="#f0f0f0" font-family="'Liberation Sans', sans-serif" text-anchor="middle" >V</text>
<line x1="2218.27" y1="279.5" x2="2218.27" y2="299.5" stroke="#5e5e5e" stroke-width="1.2" />
<text x="2173.76" y="295.9" font-size="17" fill="#f0f0f0" font-family="'Liberation Sans', sans-serif" text-anchor="middle" >W</text>
<line x1="2307.3" y1="279.5" x2="2307.3" y2="299.5" stroke="#5e5e5e" stroke-width="1.2" />
<text x="2262.78" y="295.9" font-size="17" fill="#f0f0f0" font-family="'Liberation Sans', sans-serif" text-anchor="middle" >X</text>
<line x1="2396.33" y1="279.5" x2="2396.33" y2="299.5" stroke="#5e5e5e" stroke-width="1.2" />
<text x="2351.82" y="295.9" font-size="17" fill="#f0f0f0" font-family="'Liberation Sans', sans-serif" text-anchor="middle" >Y</text>
<line x1="2485.36" y1="279.5" x2="2485.36" y2="299.5" stroke="#5e5e5e" stroke-width="1.2" />
<text x="2440.85" y="295.9" font-size="17" fill="#f0f0f0" font-family="'Liberation Sans', sans-serif" text-anchor="middle" >Z</text>
<line x1="2574.39" y1="279.5" x2="2574.39" y2="299.5" stroke="#5e5e5e" stroke-width="1.2" />
<text x="2529.88" y="295.9" font-size="17" fill="#f0f0f0" font-family="'Liberation Sans', sans-serif" text-anchor="middle" >AA</text>
<line x1="2663.42" y1="279.5" x2="2663.42" y2="299.5" stroke="#5e5e5e" stroke-width="1.2" />
<text x="2618.91" y="295.9" font-size="17" fill="#f0f0f0" font-family="'Liberation Sans', sans-serif" text-anchor="middle" >AB</text>
<line x1="2752.45" y1="279.5" x2="2752.45" y2="299.5" stroke="#5e5e5e" stroke-width="1.2" />
<text x="2707.94" y="295.9" font-size="17" fill="#f0f0f0" font-family="'Liberation Sans', sans-serif" text-anchor="middle" >AC</text>
<line x1="2841.48" y1="279.5" x2="2841.48" y2="299.5" stroke="#5e5e5e" stroke-width="1.2" />
<text x="2796.97" y="295.9" font-size="17" fill="#f0f0f0" font-family="'Liberation Sans', sans-serif" text-anchor="middle" >AD</text>
<line x1="2860.5" y1="279.5" x2="2860.5" y2="299.5" stroke="#4a4a4a" stroke-width="1.2" />
<line x1="11" y1="300" x2="2860.5" y2="300" stroke="#5a5a5a" stroke-width="1" />
<rect x="47.2" y="299.2" width="24.5" height="1.8" fill="#1f7a48" />
<path d="M44.1 283.2 V296.9 H29.4 Z" fill="#6e6e6e" />
<rect x="11.2" y="300.5" width="36" height="34.1" fill="#6e6e6e" />
<defs><clipPath id="rowclip"><rect x="11" y="300" width="36.2" height="1370"/></clipPath><clipPath id="r25"><rect x="11" y="1043" width="36" height="11.6"/></clipPath><clipPath id="r45"><rect x="11" y="1643.6" width="36" height="11"/></clipPath></defs>
<g clip-path="url(#rowclip)">
<line x1="11.2" y1="334.6" x2="47.2" y2="334.6" stroke="#777" stroke-width="1.15" />
<text x="29" y="330.9" font-size="17.5" fill="#fff" font-family="'Liberation Sans', sans-serif" text-anchor="middle" >1</text>
<line x1="11.2" y1="366.4" x2="47.2" y2="366.4" stroke="#777" stroke-width="1.15" />
<text x="29" y="362.7" font-size="17.5" fill="#f0f0f0" font-family="'Liberation Sans', sans-serif" text-anchor="middle" >2</text>
<line x1="11.2" y1="398.3" x2="47.2" y2="398.3" stroke="#777" stroke-width="1.15" />
<text x="29" y="394.6" font-size="17.5" fill="#f0f0f0" font-family="'Liberation Sans', sans-serif" text-anchor="middle" >3</text>
<line x1="11.2" y1="421.4" x2="47.2" y2="421.4" stroke="#777" stroke-width="1.15" />
<text x="29" y="417.7" font-size="17.5" fill="#f0f0f0" font-family="'Liberation Sans', sans-serif" text-anchor="middle" >4</text>
<line x1="11.2" y1="454" x2="47.2" y2="454" stroke="#777" stroke-width="1.15" />
<text x="29" y="450.3" font-size="17.5" fill="#f0f0f0" font-family="'Liberation Sans', sans-serif" text-anchor="middle" >5</text>
<line x1="11.2" y1="485" x2="47.2" y2="485" stroke="#777" stroke-width="1.15" />
<text x="29" y="481.3" font-size="17.5" fill="#f0f0f0" font-family="'Liberation Sans', sans-serif" text-anchor="middle" >6</text>
<line x1="11.2" y1="516" x2="47.2" y2="516" stroke="#777" stroke-width="1.15" />
<text x="29" y="512.3" font-size="17.5" fill="#f0f0f0" font-family="'Liberation Sans', sans-serif" text-anchor="middle" >7</text>
<line x1="11.2" y1="547" x2="47.2" y2="547" stroke="#777" stroke-width="1.15" />
<text x="29" y="543.3" font-size="17.5" fill="#f0f0f0" font-family="'Liberation Sans', sans-serif" text-anchor="middle" >8</text>
<line x1="11.2" y1="578" x2="47.2" y2="578" stroke="#777" stroke-width="1.15" />
<text x="29" y="574.3" font-size="17.5" fill="#f0f0f0" font-family="'Liberation Sans', sans-serif" text-anchor="middle" >9</text>
<line x1="11.2" y1="609" x2="47.2" y2="609" stroke="#777" stroke-width="1.15" />
<text x="29" y="605.3" font-size="17.5" fill="#f0f0f0" font-family="'Liberation Sans', sans-serif" text-anchor="middle" >10</text>
<line x1="11.2" y1="640" x2="47.2" y2="640" stroke="#777" stroke-width="1.15" />
<text x="29" y="636.3" font-size="17.5" fill="#f0f0f0" font-family="'Liberation Sans', sans-serif" text-anchor="middle" >11</text>
<line x1="11.2" y1="671" x2="47.2" y2="671" stroke="#777" stroke-width="1.15" />
<text x="29" y="667.3" font-size="17.5" fill="#f0f0f0" font-family="'Liberation Sans', sans-serif" text-anchor="middle" >12</text>
<line x1="11.2" y1="702" x2="47.2" y2="702" stroke="#777" stroke-width="1.15" />
<text x="29" y="698.3" font-size="17.5" fill="#f0f0f0" font-family="'Liberation Sans', sans-serif" text-anchor="middle" >13</text>
<line x1="11.2" y1="733" x2="47.2" y2="733" stroke="#777" stroke-width="1.15" />
<text x="29" y="729.3" font-size="17.5" fill="#f0f0f0" font-family="'Liberation Sans', sans-serif" text-anchor="middle" >14</text>
<line x1="11.2" y1="764" x2="47.2" y2="764" stroke="#777" stroke-width="1.15" />
<text x="29" y="760.3" font-size="17.5" fill="#f0f0f0" font-family="'Liberation Sans', sans-serif" text-anchor="middle" >15</text>
<line x1="11.2" y1="795" x2="47.2" y2="795" stroke="#777" stroke-width="1.15" />
<text x="29" y="791.3" font-size="17.5" fill="#f0f0f0" font-family="'Liberation Sans', sans-serif" text-anchor="middle" >16</text>
<line x1="11.2" y1="826" x2="47.2" y2="826" stroke="#777" stroke-width="1.15" />
<text x="29" y="822.3" font-size="17.5" fill="#f0f0f0" font-family="'Liberation Sans', sans-serif" text-anchor="middle" >17</text>
<line x1="11.2" y1="857" x2="47.2" y2="857" stroke="#777" stroke-width="1.15" />
<text x="29" y="853.3" font-size="17.5" fill="#f0f0f0" font-family="'Liberation Sans', sans-serif" text-anchor="middle" >18</text>
<line x1="11.2" y1="888" x2="47.2" y2="888" stroke="#777" stroke-width="1.15" />
<text x="29" y="884.3" font-size="17.5" fill="#f0f0f0" font-family="'Liberation Sans', sans-serif" text-anchor="middle" >19</text>
<line x1="11.2" y1="919" x2="47.2" y2="919" stroke="#777" stroke-width="1.15" />
<text x="29" y="915.3" font-size="17.5" fill="#f0f0f0" font-family="'Liberation Sans', sans-serif" text-anchor="middle" >20</text>
<line x1="11.2" y1="950" x2="47.2" y2="950" stroke="#777" stroke-width="1.15" />
<text x="29" y="946.3" font-size="17.5" fill="#f0f0f0" font-family="'Liberation Sans', sans-serif" text-anchor="middle" >21</text>
<line x1="11.2" y1="981" x2="47.2" y2="981" stroke="#777" stroke-width="1.15" />
<text x="29" y="977.3" font-size="17.5" fill="#f0f0f0" font-family="'Liberation Sans', sans-serif" text-anchor="middle" >22</text>
<line x1="11.2" y1="1012" x2="47.2" y2="1012" stroke="#777" stroke-width="1.15" />
<text x="29" y="1008.3" font-size="17.5" fill="#f0f0f0" font-family="'Liberation Sans', sans-serif" text-anchor="middle" >23</text>
<line x1="11.2" y1="1043" x2="47.2" y2="1043" stroke="#777" stroke-width="1.15" />
<text x="29" y="1039.3" font-size="17.5" fill="#f0f0f0" font-family="'Liberation Sans', sans-serif" text-anchor="middle" >24</text>
<line x1="11.2" y1="1054.6" x2="47.2" y2="1054.6" stroke="#777" stroke-width="1.15" />
<g clip-path="url(#r25)">
<text x="29" y="1047.6" font-size="17.5" fill="#f0f0f0" font-family="'Liberation Sans', sans-serif" text-anchor="middle" >25</text>
</g>
<line x1="11.2" y1="1085.6" x2="47.2" y2="1085.6" stroke="#777" stroke-width="1.15" />
<text x="29" y="1081.9" font-size="17.5" fill="#f0f0f0" font-family="'Liberation Sans', sans-serif" text-anchor="middle" >26</text>
<line x1="11.2" y1="1116.6" x2="47.2" y2="1116.6" stroke="#777" stroke-width="1.15" />
<text x="29" y="1112.9" font-size="17.5" fill="#f0f0f0" font-family="'Liberation Sans', sans-serif" text-anchor="middle" >27</text>
<line x1="11.2" y1="1147.6" x2="47.2" y2="1147.6" stroke="#777" stroke-width="1.15" />
<text x="29" y="1143.9" font-size="17.5" fill="#f0f0f0" font-family="'Liberation Sans', sans-serif" text-anchor="middle" >28</text>
<line x1="11.2" y1="1178.6" x2="47.2" y2="1178.6" stroke="#777" stroke-width="1.15" />
<text x="29" y="1174.9" font-size="17.5" fill="#f0f0f0" font-family="'Liberation Sans', sans-serif" text-anchor="middle" >29</text>
<line x1="11.2" y1="1209.6" x2="47.2" y2="1209.6" stroke="#777" stroke-width="1.15" />
<text x="29" y="1205.9" font-size="17.5" fill="#f0f0f0" font-family="'Liberation Sans', sans-serif" text-anchor="middle" >30</text>
<line x1="11.2" y1="1240.6" x2="47.2" y2="1240.6" stroke="#777" stroke-width="1.15" />
<text x="29" y="1236.9" font-size="17.5" fill="#f0f0f0" font-family="'Liberation Sans', sans-serif" text-anchor="middle" >31</text>
<line x1="11.2" y1="1271.6" x2="47.2" y2="1271.6" stroke="#777" stroke-width="1.15" />
<text x="29" y="1267.9" font-size="17.5" fill="#f0f0f0" font-family="'Liberation Sans', sans-serif" text-anchor="middle" >32</text>
<line x1="11.2" y1="1302.6" x2="47.2" y2="1302.6" stroke="#777" stroke-width="1.15" />
<text x="29" y="1298.9" font-size="17.5" fill="#f0f0f0" font-family="'Liberation Sans', sans-serif" text-anchor="middle" >33</text>
<line x1="11.2" y1="1333.6" x2="47.2" y2="1333.6" stroke="#777" stroke-width="1.15" />
<text x="29" y="1329.9" font-size="17.5" fill="#f0f0f0" font-family="'Liberation Sans', sans-serif" text-anchor="middle" >34</text>
<line x1="11.2" y1="1364.6" x2="47.2" y2="1364.6" stroke="#777" stroke-width="1.15" />
<text x="29" y="1360.9" font-size="17.5" fill="#f0f0f0" font-family="'Liberation Sans', sans-serif" text-anchor="middle" >35</text>
<line x1="11.2" y1="1395.6" x2="47.2" y2="1395.6" stroke="#777" stroke-width="1.15" />
<text x="29" y="1391.9" font-size="17.5" fill="#f0f0f0" font-family="'Liberation Sans', sans-serif" text-anchor="middle" >36</text>
<line x1="11.2" y1="1426.6" x2="47.2" y2="1426.6" stroke="#777" stroke-width="1.15" />
<text x="29" y="1422.9" font-size="17.5" fill="#f0f0f0" font-family="'Liberation Sans', sans-serif" text-anchor="middle" >37</text>
<line x1="11.2" y1="1457.6" x2="47.2" y2="1457.6" stroke="#777" stroke-width="1.15" />
<text x="29" y="1453.9" font-size="17.5" fill="#f0f0f0" font-family="'Liberation Sans', sans-serif" text-anchor="middle" >38</text>
<line x1="11.2" y1="1488.6" x2="47.2" y2="1488.6" stroke="#777" stroke-width="1.15" />
<text x="29" y="1484.9" font-size="17.5" fill="#f0f0f0" font-family="'Liberation Sans', sans-serif" text-anchor="middle" >39</text>
<line x1="11.2" y1="1519.6" x2="47.2" y2="1519.6" stroke="#777" stroke-width="1.15" />
<text x="29" y="1515.9" font-size="17.5" fill="#f0f0f0" font-family="'Liberation Sans', sans-serif" text-anchor="middle" >40</text>
<line x1="11.2" y1="1550.6" x2="47.2" y2="1550.6" stroke="#777" stroke-width="1.15" />
<text x="29" y="1546.9" font-size="17.5" fill="#f0f0f0" font-family="'Liberation Sans', sans-serif" text-anchor="middle" >41</text>
<line x1="11.2" y1="1581.6" x2="47.2" y2="1581.6" stroke="#777" stroke-width="1.15" />
<text x="29" y="1577.9" font-size="17.5" fill="#f0f0f0" font-family="'Liberation Sans', sans-serif" text-anchor="middle" >42</text>
<line x1="11.2" y1="1612.6" x2="47.2" y2="1612.6" stroke="#777" stroke-width="1.15" />
<text x="29" y="1608.9" font-size="17.5" fill="#f0f0f0" font-family="'Liberation Sans', sans-serif" text-anchor="middle" >43</text>
<line x1="11.2" y1="1643.6" x2="47.2" y2="1643.6" stroke="#777" stroke-width="1.15" />
<text x="29" y="1639.9" font-size="17.5" fill="#f0f0f0" font-family="'Liberation Sans', sans-serif" text-anchor="middle" >44</text>
<line x1="11.2" y1="1654.6" x2="47.2" y2="1654.6" stroke="#777" stroke-width="1.15" />
<g clip-path="url(#r45)">
<text x="29" y="1647.6" font-size="17.5" fill="#f0f0f0" font-family="'Liberation Sans', sans-serif" text-anchor="middle" >45</text>
</g>
<line x1="11.2" y1="1685.6" x2="47.2" y2="1685.6" stroke="#777" stroke-width="1.15" />
<text x="29" y="1681.9" font-size="17.5" fill="#f0f0f0" font-family="'Liberation Sans', sans-serif" text-anchor="middle" >46</text>
</g>
<line x1="47.2" y1="300" x2="47.2" y2="1670" stroke="#4a4a4a" stroke-width="1" />
<rect x="46.4" y="300" width="1.8" height="34.8" fill="#1f7a48" />
<text x="75.2" y="329.6" font-size="30" fill="#262626" font-family="'DejaVu Sans Condensed', 'DejaVu Sans', 'Liberation Sans', sans-serif" font-weight="bold" textLength="253.5" lengthAdjust="spacingAndGlyphs" >Financial Charts</text>
<text x="75.3" y="360.8" font-size="24.6" fill="#000" font-family="'DejaVu Sans Condensed', 'DejaVu Sans', 'Liberation Sans', sans-serif" font-weight="bold" textLength="246" lengthAdjust="spacingAndGlyphs" >ABC Company Inc.</text>
<text x="74.6" y="388.5" font-size="17.3" fill="#2b72ea" font-family="'DejaVu Sans Condensed', 'DejaVu Sans', 'Liberation Sans', sans-serif" font-weight="bold" textLength="209.5" lengthAdjust="spacingAndGlyphs" >Go to Table of Contents</text>
<rect x="74.2" y="390" width="210.2" height="1.6" fill="#2b72ea" />
<line x1="47.2" y1="454.4" x2="2860.5" y2="454.4" stroke="#8c8c8c" stroke-width="1" />
<rect x="70.6" y="421.4" width="1332" height="32.8" fill="#4b4fd1" />
<rect x="1416.2" y="421.4" width="1424.6" height="32.8" fill="#4b4fd1" />
<rect x="1402.4" y="454" width="14.7" height="1216.4" fill="#bfbfbf" />
<rect x="1402.2" y="421.4" width="14" height="32.8" fill="#c0c0c0" />
<text x="736.5" y="447.3" font-size="25" fill="#fff" font-family="'DejaVu Sans Condensed', 'DejaVu Sans', 'Liberation Sans', sans-serif" font-weight="bold" text-anchor="middle" textLength="95" lengthAdjust="spacingAndGlyphs" >5 years</text>
<text x="2129" y="447.3" font-size="25" fill="#fff" font-family="'DejaVu Sans Condensed', 'DejaVu Sans', 'Liberation Sans', sans-serif" font-weight="bold" text-anchor="middle" textLength="141" lengthAdjust="spacingAndGlyphs" >60 months</text>
<rect x="93.4" y="1043.1" width="2747.2" height="11.8" fill="#bfbfbf" />
<rect x="93.4" y="1643.2" width="2747.2" height="11.6" fill="#bfbfbf" />
</g>
<g id="charts">
<text x="324" y="496.5" font-size="32" fill="#000" font-family="'DejaVu Sans', 'Liberation Sans', sans-serif" font-weight="bold" textLength="553" lengthAdjust="spacingAndGlyphs" >REVENUE BREAKDOWN - $'000</text>
<rect x="84" y="511.1" width="10" height="9.4" fill="#4ab2e6" />
<text x="97.8" y="521.7" font-size="17" fill="#000" font-family="'DejaVu Sans Condensed', 'DejaVu Sans', 'Liberation Sans', sans-serif" textLength="165.2" lengthAdjust="spacingAndGlyphs" >Commission Revenue</text>
<rect x="410.2" y="511.1" width="10" height="9.4" fill="#4b4fd1" />
<text x="424" y="521.7" font-size="17" fill="#000" font-family="'DejaVu Sans Condensed', 'DejaVu Sans', 'Liberation Sans', sans-serif" textLength="283" lengthAdjust="spacingAndGlyphs" >Sellers Subscription - Small Business</text>
<rect x="737" y="511.1" width="10" height="9.4" fill="#f07d70" />
<text x="750.8" y="521.7" font-size="17" fill="#000" font-family="'DejaVu Sans Condensed', 'DejaVu Sans', 'Liberation Sans', sans-serif" textLength="254.5" lengthAdjust="spacingAndGlyphs" >Sellers Subscription - Mid-Market</text>
<rect x="1063" y="511.1" width="10" height="9.4" fill="#f5b417" />
<text x="1076.8" y="521.7" font-size="17" fill="#000" font-family="'DejaVu Sans Condensed', 'DejaVu Sans', 'Liberation Sans', sans-serif" textLength="246.3" lengthAdjust="spacingAndGlyphs" >Sellers Subscription - Enterprise</text>
<rect x="84" y="537.1" width="10" height="9.4" fill="#2fb5a3" />
<text x="97.8" y="547.7" font-size="17" fill="#000" font-family="'DejaVu Sans Condensed', 'DejaVu Sans', 'Liberation Sans', sans-serif" textLength="261.2" lengthAdjust="spacingAndGlyphs" >Buyers Subscription - Casual User</text>
<rect x="410.2" y="537.1" width="10" height="9.4" fill="#64993c" />
<text x="424" y="547.7" font-size="17" fill="#000" font-family="'DejaVu Sans Condensed', 'DejaVu Sans', 'Liberation Sans', sans-serif" textLength="299.2" lengthAdjust="spacingAndGlyphs" >Buyers Subscription - Regular Shopper</text>
<rect x="737" y="537.1" width="10" height="9.4" fill="#90a4d6" />
<text x="750.8" y="547.7" font-size="17" fill="#000" font-family="'DejaVu Sans Condensed', 'DejaVu Sans', 'Liberation Sans', sans-serif" textLength="257.6" lengthAdjust="spacingAndGlyphs" >Buyers Subscription - Power User</text>
<rect x="1063" y="537.1" width="10" height="9.4" fill="#f0a78d" />
<text x="1076.8" y="547.7" font-size="17" fill="#000" font-family="'DejaVu Sans Condensed', 'DejaVu Sans', 'Liberation Sans', sans-serif" textLength="166" lengthAdjust="spacingAndGlyphs" >Ads / Promotion Fees</text>
<rect x="84" y="563.1" width="10" height="9.4" fill="#bfbfbf" />
<text x="97.8" y="573.7" font-size="17" fill="#000" font-family="'DejaVu Sans Condensed', 'DejaVu Sans', 'Liberation Sans', sans-serif" textLength="90.4" lengthAdjust="spacingAndGlyphs" >Listing Fees</text>
<rect x="410.2" y="563.1" width="10" height="9.4" fill="#fdd08a" />
<text x="424" y="573.7" font-size="17" fill="#000" font-family="'DejaVu Sans Condensed', 'DejaVu Sans', 'Liberation Sans', sans-serif" textLength="196" lengthAdjust="spacingAndGlyphs" >Payment Processing Fees</text>
<line x1="199.5" y1="613.5" x2="1319.6" y2="613.5" stroke="#569fcb" stroke-width="1.15" />
<line x1="199.5" y1="662.5" x2="1319.6" y2="662.5" stroke="#569fcb" stroke-width="1.15" />
<line x1="199.5" y1="710.5" x2="1319.6" y2="710.5" stroke="#569fcb" stroke-width="1.15" />
<line x1="199.5" y1="759.5" x2="1319.6" y2="759.5" stroke="#569fcb" stroke-width="1.15" />
<line x1="199.5" y1="808.5" x2="1319.6" y2="808.5" stroke="#569fcb" stroke-width="1.15" />
<line x1="199.5" y1="857.5" x2="1319.6" y2="857.5" stroke="#569fcb" stroke-width="1.15" />
<line x1="199.5" y1="906.5" x2="1319.6" y2="906.5" stroke="#569fcb" stroke-width="1.15" />
<text x="174.2" y="620.6" font-size="20" fill="#000" font-family="'DejaVu Sans Condensed', 'DejaVu Sans', 'Liberation Sans', sans-serif" font-weight="bold" text-anchor="end" textLength="82.94" lengthAdjust="spacingAndGlyphs" >140,000</text>
<text x="174.2" y="669.4" font-size="20" fill="#000" font-family="'DejaVu Sans Condensed', 'DejaVu Sans', 'Liberation Sans', sans-serif" font-weight="bold" text-anchor="end" textLength="82.94" lengthAdjust="spacingAndGlyphs" >120,000</text>
<text x="174.2" y="718.2" font-size="20" fill="#000" font-family="'DejaVu Sans Condensed', 'DejaVu Sans', 'Liberation Sans', sans-serif" font-weight="bold" text-anchor="end" textLength="82.94" lengthAdjust="spacingAndGlyphs" >100,000</text>
<text x="174.2" y="767" font-size="20" fill="#000" font-family="'DejaVu Sans Condensed', 'DejaVu Sans', 'Liberation Sans', sans-serif" font-weight="bold" text-anchor="end" textLength="70.27" lengthAdjust="spacingAndGlyphs" >80,000</text>
<text x="174.2" y="815.8" font-size="20" fill="#000" font-family="'DejaVu Sans Condensed', 'DejaVu Sans', 'Liberation Sans', sans-serif" font-weight="bold" text-anchor="end" textLength="70.27" lengthAdjust="spacingAndGlyphs" >60,000</text>
<text x="174.2" y="864.6" font-size="20" fill="#000" font-family="'DejaVu Sans Condensed', 'DejaVu Sans', 'Liberation Sans', sans-serif" font-weight="bold" text-anchor="end" textLength="70.27" lengthAdjust="spacingAndGlyphs" >40,000</text>
<text x="174.2" y="913.4" font-size="20" fill="#000" font-family="'DejaVu Sans Condensed', 'DejaVu Sans', 'Liberation Sans', sans-serif" font-weight="bold" text-anchor="end" textLength="70.27" lengthAdjust="spacingAndGlyphs" >20,000</text>
<text x="162.5" y="961.4" font-size="20" fill="#000" font-family="'DejaVu Sans Condensed', 'DejaVu Sans', 'Liberation Sans', sans-serif" font-weight="bold" text-anchor="end" >-</text>
<rect x="241.5" y="944" width="140" height="1" fill="#f0a78d" />
<rect x="241.5" y="944.7" width="140" height="1.3" fill="#90a4d6" />
<rect x="241.5" y="945.7" width="140" height="4.3" fill="#64993c" />
<rect x="241.5" y="949.7" width="140" height="0.9" fill="#f5b417" />
<rect x="241.5" y="950.3" width="140" height="0.9" fill="#f07d70" />
<rect x="241.5" y="950.9" width="140" height="0.8" fill="#4b4fd1" />
<rect x="241.5" y="951.4" width="140" height="3.7" fill="#4ab2e6" />
<rect x="465.5" y="922.9" width="140" height="2" fill="#f0a78d" />
<rect x="465.5" y="924.6" width="140" height="5.5" fill="#90a4d6" />
<rect x="465.5" y="929.8" width="140" height="10.1" fill="#64993c" />
<rect x="465.5" y="939.6" width="140" height="1.7" fill="#f5b417" />
<rect x="465.5" y="941" width="140" height="1.9" fill="#f07d70" />
<rect x="465.5" y="942.6" width="140" height="1.3" fill="#4b4fd1" />
<rect x="465.5" y="943.6" width="140" height="11.5" fill="#4ab2e6" />
<rect x="689.5" y="887.2" width="140" height="4.4" fill="#f0a78d" />
<rect x="689.5" y="891.3" width="140" height="10" fill="#90a4d6" />
<rect x="689.5" y="901" width="140" height="21.4" fill="#64993c" />
<rect x="689.5" y="922.1" width="140" height="2.8" fill="#f5b417" />
<rect x="689.5" y="924.6" width="140" height="3.1" fill="#f07d70" />
<rect x="689.5" y="927.4" width="140" height="1.9" fill="#4b4fd1" />
<rect x="689.5" y="929" width="140" height="26.1" fill="#4ab2e6" />
<rect x="913.5" y="823.2" width="140" height="7.3" fill="#f0a78d" />
<rect x="913.5" y="830.2" width="140" height="20.2" fill="#90a4d6" />
<rect x="913.5" y="850.1" width="140" height="40.1" fill="#64993c" />
<rect x="913.5" y="889.9" width="140" height="3.2" fill="#f5b417" />
<rect x="913.5" y="892.8" width="140" height="5.4" fill="#f07d70" />
<rect x="913.5" y="897.9" width="140" height="3.2" fill="#4b4fd1" />
<rect x="913.5" y="900.8" width="140" height="54.3" fill="#4ab2e6" />
<rect x="1137.5" y="652.2" width="140" height="11.5" fill="#f0a78d" />
<rect x="1137.5" y="663.4" width="140" height="44.9" fill="#90a4d6" />
<rect x="1137.5" y="708" width="140" height="94.9" fill="#64993c" />
<rect x="1137.5" y="802.6" width="140" height="4.8" fill="#f5b417" />
<rect x="1137.5" y="807.1" width="140" height="8" fill="#f07d70" />
<rect x="1137.5" y="814.8" width="140" height="4.2" fill="#4b4fd1" />
<rect x="1137.5" y="818.7" width="140" height="136.4" fill="#4ab2e6" />
<line x1="199.5" y1="954.8" x2="1319.6" y2="954.8" stroke="#4aa3dc" stroke-width="2.2" />
<text x="311.5" y="1008.6" font-size="21" fill="#000" font-family="'DejaVu Sans Condensed', 'DejaVu Sans', 'Liberation Sans', sans-serif" font-weight="bold" text-anchor="middle" textLength="50.3" lengthAdjust="spacingAndGlyphs" >2026</text>
<text x="535.5" y="1008.6" font-size="21" fill="#000" font-family="'DejaVu Sans Condensed', 'DejaVu Sans', 'Liberation Sans', sans-serif" font-weight="bold" text-anchor="middle" textLength="50.3" lengthAdjust="spacingAndGlyphs" >2027</text>
<text x="759.5" y="1008.6" font-size="21" fill="#000" font-family="'DejaVu Sans Condensed', 'DejaVu Sans', 'Liberation Sans', sans-serif" font-weight="bold" text-anchor="middle" textLength="50.3" lengthAdjust="spacingAndGlyphs" >2028</text>
<text x="983.5" y="1008.6" font-size="21" fill="#000" font-family="'DejaVu Sans Condensed', 'DejaVu Sans', 'Liberation Sans', sans-serif" font-weight="bold" text-anchor="middle" textLength="50.3" lengthAdjust="spacingAndGlyphs" >2029</text>
<text x="1207.5" y="1008.6" font-size="21" fill="#000" font-family="'DejaVu Sans Condensed', 'DejaVu Sans', 'Liberation Sans', sans-serif" font-weight="bold" text-anchor="middle" textLength="50.3" lengthAdjust="spacingAndGlyphs" >2030</text>
<text x="1823" y="494.8" font-size="32" fill="#000" font-family="'DejaVu Sans', 'Liberation Sans', sans-serif" font-weight="bold" textLength="553.8" lengthAdjust="spacingAndGlyphs" >REVENUE BREAKDOWN - $'000</text>
<rect x="1550.8" y="526.4" width="10" height="9.4" fill="#4ab2e6" />
<text x="1564.6" y="537" font-size="17" fill="#000" font-family="'DejaVu Sans Condensed', 'DejaVu Sans', 'Liberation Sans', sans-serif" textLength="164.8" lengthAdjust="spacingAndGlyphs" >Commission Revenue</text>
<rect x="1854.3" y="526.4" width="10" height="9.4" fill="#4b4fd1" />
<text x="1868.1" y="537" font-size="17" fill="#000" font-family="'DejaVu Sans Condensed', 'DejaVu Sans', 'Liberation Sans', sans-serif" textLength="282.8" lengthAdjust="spacingAndGlyphs" >Sellers Subscription - Small Business</text>
<rect x="2273" y="526.4" width="10" height="9.4" fill="#f07d70" />
<text x="2286.8" y="537" font-size="17" fill="#000" font-family="'DejaVu Sans Condensed', 'DejaVu Sans', 'Liberation Sans', sans-serif" textLength="254.5" lengthAdjust="spacingAndGlyphs" >Sellers Subscription - Mid-Market</text>
<line x1="1518.9" y1="612.5" x2="2792" y2="612.5" stroke="#569fcb" stroke-width="1.15" />
<line x1="1518.9" y1="661.5" x2="2792" y2="661.5" stroke="#569fcb" stroke-width="1.15" />
<line x1="1518.9" y1="710.5" x2="2792" y2="710.5" stroke="#569fcb" stroke-width="1.15" />
<line x1="1518.9" y1="758.5" x2="2792" y2="758.5" stroke="#569fcb" stroke-width="1.15" />
<line x1="1518.9" y1="807.5" x2="2792" y2="807.5" stroke="#569fcb" stroke-width="1.15" />
<line x1="1518.9" y1="856.5" x2="2792" y2="856.5" stroke="#569fcb" stroke-width="1.15" />
<line x1="1518.9" y1="904.5" x2="2792" y2="904.5" stroke="#569fcb" stroke-width="1.15" />
<text x="1493.8" y="620" font-size="20" fill="#000" font-family="'DejaVu Sans Condensed', 'DejaVu Sans', 'Liberation Sans', sans-serif" font-weight="bold" text-anchor="end" textLength="70.27" lengthAdjust="spacingAndGlyphs" >14,000</text>
<text x="1493.8" y="668.7" font-size="20" fill="#000" font-family="'DejaVu Sans Condensed', 'DejaVu Sans', 'Liberation Sans', sans-serif" font-weight="bold" text-anchor="end" textLength="70.27" lengthAdjust="spacingAndGlyphs" >12,000</text>
<text x="1493.8" y="717.4" font-size="20" fill="#000" font-family="'DejaVu Sans Condensed', 'DejaVu Sans', 'Liberation Sans', sans-serif" font-weight="bold" text-anchor="end" textLength="70.27" lengthAdjust="spacingAndGlyphs" >10,000</text>
<text x="1493.8" y="766.1" font-size="20" fill="#000" font-family="'DejaVu Sans Condensed', 'DejaVu Sans', 'Liberation Sans', sans-serif" font-weight="bold" text-anchor="end" textLength="57.6" lengthAdjust="spacingAndGlyphs" >8,000</text>
<text x="1493.8" y="814.8" font-size="20" fill="#000" font-family="'DejaVu Sans Condensed', 'DejaVu Sans', 'Liberation Sans', sans-serif" font-weight="bold" text-anchor="end" textLength="57.6" lengthAdjust="spacingAndGlyphs" >6,000</text>
<text x="1493.8" y="863.5" font-size="20" fill="#000" font-family="'DejaVu Sans Condensed', 'DejaVu Sans', 'Liberation Sans', sans-serif" font-weight="bold" text-anchor="end" textLength="57.6" lengthAdjust="spacingAndGlyphs" >4,000</text>
<text x="1493.8" y="912.2" font-size="20" fill="#000" font-family="'DejaVu Sans Condensed', 'DejaVu Sans', 'Liberation Sans', sans-serif" font-weight="bold" text-anchor="end" textLength="57.6" lengthAdjust="spacingAndGlyphs" >2,000</text>
<text x="1482.1" y="960.4" font-size="20" fill="#000" font-family="'DejaVu Sans Condensed', 'DejaVu Sans', 'Liberation Sans', sans-serif" font-weight="bold" text-anchor="end" >-</text>
<path d="M1518.9,952.6 L1518.9,951.4 L1540.48,949.74 L1562.06,948.08 L1583.63,946.42 L1605.21,944.76 L1626.79,943.1 L1648.37,942.58 L1669.95,942.07 L1691.52,941.55 L1713.1,941.03 L1734.68,940.52 L1756.26,940 L1777.84,936.6 L1799.41,934.36 L1820.99,932.12 L1842.57,929.88 L1864.15,927.64 L1885.73,925.4 L1907.3,924.65 L1928.88,923.9 L1950.46,923.15 L1972.04,922.4 L1993.62,921.65 L2015.19,920.9 L2036.77,913.2 L2058.35,909.42 L2079.93,905.64 L2101.51,901.86 L2123.08,898.08 L2144.66,894.3 L2166.24,892.95 L2187.82,891.6 L2209.39,890.25 L2230.97,888.9 L2252.55,887.55 L2274.13,886.2 L2295.71,874.6 L2317.28,867.42 L2338.86,860.24 L2360.44,853.06 L2382.02,845.88 L2403.6,838.7 L2425.17,836.38 L2446.75,834.07 L2468.33,831.75 L2489.91,829.43 L2511.49,827.12 L2533.06,824.8 L2554.64,797.4 L2576.22,774.94 L2597.8,752.48 L2619.38,730.02 L2640.95,707.56 L2662.53,685.1 L2684.11,678.33 L2705.69,671.57 L2727.27,664.8 L2748.84,658.03 L2770.42,651.27 L2792,644.5 L2792,952.6 Z" fill="#f0a78d" />
<path d="M1518.9,952.6 L1518.9,951.5 L1540.48,949.92 L1562.06,948.34 L1583.63,946.76 L1605.21,945.18 L1626.79,943.6 L1648.37,943.13 L1669.95,942.67 L1691.52,942.2 L1713.1,941.73 L1734.68,941.27 L1756.26,940.8 L1777.84,937.6 L1799.41,935.48 L1820.99,933.36 L1842.57,931.24 L1864.15,929.12 L1885.73,927 L1907.3,926.3 L1928.88,925.6 L1950.46,924.9 L1972.04,924.2 L1993.62,923.5 L2015.19,922.8 L2036.77,915.2 L2058.35,911.56 L2079.93,907.92 L2101.51,904.28 L2123.08,900.64 L2144.66,897 L2166.24,895.92 L2187.82,894.83 L2209.39,893.75 L2230.97,892.67 L2252.55,891.58 L2274.13,890.5 L2295.71,878.7 L2317.28,871.8 L2338.86,864.9 L2360.44,858 L2382.02,851.1 L2403.6,844.2 L2425.17,842.05 L2446.75,839.9 L2468.33,837.75 L2489.91,835.6 L2511.49,833.45 L2533.06,831.3 L2554.64,804.8 L2576.22,782.62 L2597.8,760.44 L2619.38,738.26 L2640.95,716.08 L2662.53,693.9 L2684.11,687.4 L2705.69,680.9 L2727.27,674.4 L2748.84,667.9 L2770.42,661.4 L2792,654.9 L2792,952.6 Z" fill="#90a4d6" />
<path d="M1518.9,952.6 L1518.9,951.6 L1540.48,950.28 L1562.06,948.96 L1583.63,947.64 L1605.21,946.32 L1626.79,945 L1648.37,944.6 L1669.95,944.2 L1691.52,943.8 L1713.1,943.4 L1734.68,943 L1756.26,942.6 L1777.84,940.3 L1799.41,938.44 L1820.99,936.58 L1842.57,934.72 L1864.15,932.86 L1885.73,931 L1907.3,930.4 L1928.88,929.8 L1950.46,929.2 L1972.04,928.6 L1993.62,928 L2015.19,927.4 L2036.77,921.7 L2058.35,918.58 L2079.93,915.46 L2101.51,912.34 L2123.08,909.22 L2144.66,906.1 L2166.24,905.32 L2187.82,904.53 L2209.39,903.75 L2230.97,902.97 L2252.55,902.18 L2274.13,901.4 L2295.71,890.9 L2317.28,884.72 L2338.86,878.54 L2360.44,872.36 L2382.02,866.18 L2403.6,860 L2425.17,858.68 L2446.75,857.37 L2468.33,856.05 L2489.91,854.73 L2511.49,853.42 L2533.06,852.1 L2554.64,828.8 L2576.22,808.98 L2597.8,789.16 L2619.38,769.34 L2640.95,749.52 L2662.53,729.7 L2684.11,725.63 L2705.69,721.57 L2727.27,717.5 L2748.84,713.43 L2770.42,709.37 L2792,705.3 L2792,952.6 Z" fill="#64993c" />
<path d="M1518.9,952.6 L1518.9,952.1 L1540.48,951.48 L1562.06,950.86 L1583.63,950.24 L1605.21,949.62 L1626.79,949 L1648.37,948.77 L1669.95,948.53 L1691.52,948.3 L1713.1,948.07 L1734.68,947.83 L1756.26,947.6 L1777.84,946.3 L1799.41,944.92 L1820.99,943.54 L1842.57,942.16 L1864.15,940.78 L1885.73,939.4 L1907.3,939.02 L1928.88,938.63 L1950.46,938.25 L1972.04,937.87 L1993.62,937.48 L2015.19,937.1 L2036.77,933.5 L2058.35,931.88 L2079.93,930.26 L2101.51,928.64 L2123.08,927.02 L2144.66,925.4 L2166.24,924.45 L2187.82,923.5 L2209.39,922.55 L2230.97,921.6 L2252.55,920.65 L2274.13,919.7 L2295.71,913.6 L2317.28,910.2 L2338.86,906.8 L2360.44,903.4 L2382.02,900 L2403.6,896.6 L2425.17,895.1 L2446.75,893.6 L2468.33,892.1 L2489.91,890.6 L2511.49,889.1 L2533.06,887.6 L2554.64,875.4 L2576.22,864.18 L2597.8,852.96 L2619.38,841.74 L2640.95,830.52 L2662.53,819.3 L2684.11,815.07 L2705.69,810.83 L2727.27,806.6 L2748.84,802.37 L2770.42,798.13 L2792,793.9 L2792,952.6 Z" fill="#f5b417" />
<path d="M1518.9,952.6 L1518.9,952.2 L1540.48,951.62 L1562.06,951.04 L1583.63,950.46 L1605.21,949.88 L1626.79,949.3 L1648.37,949.08 L1669.95,948.87 L1691.52,948.65 L1713.1,948.43 L1734.68,948.22 L1756.26,948 L1777.84,946.8 L1799.41,945.46 L1820.99,944.12 L1842.57,942.78 L1864.15,941.44 L1885.73,940.1 L1907.3,939.72 L1928.88,939.33 L1950.46,938.95 L1972.04,938.57 L1993.62,938.18 L2015.19,937.8 L2036.77,934.2 L2058.35,932.66 L2079.93,931.12 L2101.51,929.58 L2123.08,928.04 L2144.66,926.5 L2166.24,925.7 L2187.82,924.9 L2209.39,924.1 L2230.97,923.3 L2252.55,922.5 L2274.13,921.7 L2295.71,915.8 L2317.28,912.36 L2338.86,908.92 L2360.44,905.48 L2382.02,902.04 L2403.6,898.6 L2425.17,897.32 L2446.75,896.03 L2468.33,894.75 L2489.91,893.47 L2511.49,892.18 L2533.06,890.9 L2554.64,878.5 L2576.22,867.3 L2597.8,856.1 L2619.38,844.9 L2640.95,833.7 L2662.53,822.5 L2684.11,818.55 L2705.69,814.6 L2727.27,810.65 L2748.84,806.7 L2770.42,802.75 L2792,798.8 L2792,952.6 Z" fill="#f07d70" />
<path d="M1518.9,952.6 L1518.9,952.3 L1540.48,951.8 L1562.06,951.3 L1583.63,950.8 L1605.21,950.3 L1626.79,949.8 L1648.37,949.6 L1669.95,949.4 L1691.52,949.2 L1713.1,949 L1734.68,948.8 L1756.26,948.6 L1777.84,947.6 L1799.41,946.38 L1820.99,945.16 L1842.57,943.94 L1864.15,942.72 L1885.73,941.5 L1907.3,941.17 L1928.88,940.83 L1950.46,940.5 L1972.04,940.17 L1993.62,939.83 L2015.19,939.5 L2036.77,935.5 L2058.35,934.2 L2079.93,932.9 L2101.51,931.6 L2123.08,930.3 L2144.66,929 L2166.24,928.4 L2187.82,927.8 L2209.39,927.2 L2230.97,926.6 L2252.55,926 L2274.13,925.4 L2295.71,919.7 L2317.28,916.3 L2338.86,912.9 L2360.44,909.5 L2382.02,906.1 L2403.6,902.7 L2425.17,901.43 L2446.75,900.17 L2468.33,898.9 L2489.91,897.63 L2511.49,896.37 L2533.06,895.1 L2554.64,883 L2576.22,872.08 L2597.8,861.16 L2619.38,850.24 L2640.95,839.32 L2662.53,828.4 L2684.11,824.55 L2705.69,820.7 L2727.27,816.85 L2748.84,813 L2770.42,809.15 L2792,805.3 L2792,952.6 Z" fill="#4b4fd1" />
<path d="M1518.9,954.4 L1518.9,952.3 L1540.48,951.84 L1562.06,951.38 L1583.63,950.92 L1605.21,950.46 L1626.79,950 L1648.37,949.8 L1669.95,949.6 L1691.52,949.4 L1713.1,949.2 L1734.68,949 L1756.26,948.8 L1777.84,947.8 L1799.41,946.62 L1820.99,945.44 L1842.57,944.26 L1864.15,943.08 L1885.73,941.9 L1907.3,941.58 L1928.88,941.27 L1950.46,940.95 L1972.04,940.63 L1993.62,940.32 L2015.19,940 L2036.77,936.1 L2058.35,934.88 L2079.93,933.66 L2101.51,932.44 L2123.08,931.22 L2144.66,930 L2166.24,929.47 L2187.82,928.93 L2209.39,928.4 L2230.97,927.87 L2252.55,927.33 L2274.13,926.8 L2295.71,921.3 L2317.28,917.94 L2338.86,914.58 L2360.44,911.22 L2382.02,907.86 L2403.6,904.5 L2425.17,903.42 L2446.75,902.33 L2468.33,901.25 L2489.91,900.17 L2511.49,899.08 L2533.06,898 L2554.64,885.5 L2576.22,874.66 L2597.8,863.82 L2619.38,852.98 L2640.95,842.14 L2662.53,831.3 L2684.11,827.72 L2705.69,824.13 L2727.27,820.55 L2748.84,816.97 L2770.42,813.38 L2792,809.8 L2792,954.4 Z" fill="#4ab2e6" />
<text transform="translate(1525.2,978.8) rotate(-45)" font-size="20" fill="#000" font-family="'DejaVu Sans Condensed', 'DejaVu Sans', 'Liberation Sans', sans-serif" text-anchor="end">Jan-26</text>
<text transform="translate(1568.36,978.8) rotate(-45)" font-size="20" fill="#000" font-family="'DejaVu Sans Condensed', 'DejaVu Sans', 'Liberation Sans', sans-serif" text-anchor="end">Mar-26</text>
<text transform="translate(1611.51,978.8) rotate(-45)" font-size="20" fill="#000" font-family="'DejaVu Sans Condensed', 'DejaVu Sans', 'Liberation Sans', sans-serif" text-anchor="end">May-26</text>
<text transform="translate(1654.67,978.8) rotate(-45)" font-size="20" fill="#000" font-family="'DejaVu Sans Condensed', 'DejaVu Sans', 'Liberation Sans', sans-serif" text-anchor="end">Jul-26</text>
<text transform="translate(1697.82,978.8) rotate(-45)" font-size="20" fill="#000" font-family="'DejaVu Sans Condensed', 'DejaVu Sans', 'Liberation Sans', sans-serif" text-anchor="end">Sep-26</text>
<text transform="translate(1740.98,978.8) rotate(-45)" font-size="20" fill="#000" font-family="'DejaVu Sans Condensed', 'DejaVu Sans', 'Liberation Sans', sans-serif" text-anchor="end">Nov-26</text>
<text transform="translate(1784.14,978.8) rotate(-45)" font-size="20" fill="#000" font-family="'DejaVu Sans Condensed', 'DejaVu Sans', 'Liberation Sans', sans-serif" text-anchor="end">Jan-27</text>
<text transform="translate(1827.29,978.8) rotate(-45)" font-size="20" fill="#000" font-family="'DejaVu Sans Condensed', 'DejaVu Sans', 'Liberation Sans', sans-serif" text-anchor="end">Mar-27</text>
<text transform="translate(1870.45,978.8) rotate(-45)" font-size="20" fill="#000" font-family="'DejaVu Sans Condensed', 'DejaVu Sans', 'Liberation Sans', sans-serif" text-anchor="end">May-27</text>
<text transform="translate(1913.6,978.8) rotate(-45)" font-size="20" fill="#000" font-family="'DejaVu Sans Condensed', 'DejaVu Sans', 'Liberation Sans', sans-serif" text-anchor="end">Jul-27</text>
<text transform="translate(1956.76,978.8) rotate(-45)" font-size="20" fill="#000" font-family="'DejaVu Sans Condensed', 'DejaVu Sans', 'Liberation Sans', sans-serif" text-anchor="end">Sep-27</text>
<text transform="translate(1999.92,978.8) rotate(-45)" font-size="20" fill="#000" font-family="'DejaVu Sans Condensed', 'DejaVu Sans', 'Liberation Sans', sans-serif" text-anchor="end">Nov-27</text>
<text transform="translate(2043.07,978.8) rotate(-45)" font-size="20" fill="#000" font-family="'DejaVu Sans Condensed', 'DejaVu Sans', 'Liberation Sans', sans-serif" text-anchor="end">Jan-28</text>
<text transform="translate(2086.23,978.8) rotate(-45)" font-size="20" fill="#000" font-family="'DejaVu Sans Condensed', 'DejaVu Sans', 'Liberation Sans', sans-serif" text-anchor="end">Mar-28</text>
<text transform="translate(2129.38,978.8) rotate(-45)" font-size="20" fill="#000" font-family="'DejaVu Sans Condensed', 'DejaVu Sans', 'Liberation Sans', sans-serif" text-anchor="end">May-28</text>
<text transform="translate(2172.54,978.8) rotate(-45)" font-size="20" fill="#000" font-family="'DejaVu Sans Condensed', 'DejaVu Sans', 'Liberation Sans', sans-serif" text-anchor="end">Jul-28</text>
<text transform="translate(2215.69,978.8) rotate(-45)" font-size="20" fill="#000" font-family="'DejaVu Sans Condensed', 'DejaVu Sans', 'Liberation Sans', sans-serif" text-anchor="end">Sep-28</text>
<text transform="translate(2258.85,978.8) rotate(-45)" font-size="20" fill="#000" font-family="'DejaVu Sans Condensed', 'DejaVu Sans', 'Liberation Sans', sans-serif" text-anchor="end">Nov-28</text>
<text transform="translate(2302.01,978.8) rotate(-45)" font-size="20" fill="#000" font-family="'DejaVu Sans Condensed', 'DejaVu Sans', 'Liberation Sans', sans-serif" text-anchor="end">Jan-29</text>
<text transform="translate(2345.16,978.8) rotate(-45)" font-size="20" fill="#000" font-family="'DejaVu Sans Condensed', 'DejaVu Sans', 'Liberation Sans', sans-serif" text-anchor="end">Mar-29</text>
<text transform="translate(2388.32,978.8) rotate(-45)" font-size="20" fill="#000" font-family="'DejaVu Sans Condensed', 'DejaVu Sans', 'Liberation Sans', sans-serif" text-anchor="end">May-29</text>
<text transform="translate(2431.47,978.8) rotate(-45)" font-size="20" fill="#000" font-family="'DejaVu Sans Condensed', 'DejaVu Sans', 'Liberation Sans', sans-serif" text-anchor="end">Jul-29</text>
<text transform="translate(2474.63,978.8) rotate(-45)" font-size="20" fill="#000" font-family="'DejaVu Sans Condensed', 'DejaVu Sans', 'Liberation Sans', sans-serif" text-anchor="end">Sep-29</text>
<text transform="translate(2517.79,978.8) rotate(-45)" font-size="20" fill="#000" font-family="'DejaVu Sans Condensed', 'DejaVu Sans', 'Liberation Sans', sans-serif" text-anchor="end">Nov-29</text>
<text transform="translate(2560.94,978.8) rotate(-45)" font-size="20" fill="#000" font-family="'DejaVu Sans Condensed', 'DejaVu Sans', 'Liberation Sans', sans-serif" text-anchor="end">Jan-30</text>
<text transform="translate(2604.1,978.8) rotate(-45)" font-size="20" fill="#000" font-family="'DejaVu Sans Condensed', 'DejaVu Sans', 'Liberation Sans', sans-serif" text-anchor="end">Mar-30</text>
<text transform="translate(2647.25,978.8) rotate(-45)" font-size="20" fill="#000" font-family="'DejaVu Sans Condensed', 'DejaVu Sans', 'Liberation Sans', sans-serif" text-anchor="end">May-30</text>
<text transform="translate(2690.41,978.8) rotate(-45)" font-size="20" fill="#000" font-family="'DejaVu Sans Condensed', 'DejaVu Sans', 'Liberation Sans', sans-serif" text-anchor="end">Jul-30</text>
<text transform="translate(2733.57,978.8) rotate(-45)" font-size="20" fill="#000" font-family="'DejaVu Sans Condensed', 'DejaVu Sans', 'Liberation Sans', sans-serif" text-anchor="end">Sep-30</text>
<text transform="translate(2776.72,978.8) rotate(-45)" font-size="20" fill="#000" font-family="'DejaVu Sans Condensed', 'DejaVu Sans', 'Liberation Sans', sans-serif" text-anchor="end">Nov-30</text>
<text x="441.2" y="1097.8" font-size="33" fill="#000" font-family="'DejaVu Sans', 'Liberation Sans', sans-serif" font-weight="bold" textLength="419.5" lengthAdjust="spacingAndGlyphs" >CASH BALANCE - $'000</text>
<line x1="198.6" y1="1144.5" x2="1328.3" y2="1144.5" stroke="#569fcb" stroke-width="1.15" />
<line x1="198.6" y1="1203.5" x2="1328.3" y2="1203.5" stroke="#569fcb" stroke-width="1.15" />
<line x1="198.6" y1="1262.5" x2="1328.3" y2="1262.5" stroke="#569fcb" stroke-width="1.15" />
<line x1="198.6" y1="1321.5" x2="1328.3" y2="1321.5" stroke="#569fcb" stroke-width="1.15" />
<line x1="198.6" y1="1379.5" x2="1328.3" y2="1379.5" stroke="#569fcb" stroke-width="1.15" />
<line x1="198.6" y1="1438.5" x2="1328.3" y2="1438.5" stroke="#569fcb" stroke-width="1.15" />
<line x1="198.6" y1="1497.5" x2="1328.3" y2="1497.5" stroke="#569fcb" stroke-width="1.15" />
<text x="174.2" y="1152.3" font-size="20" fill="#000" font-family="'DejaVu Sans Condensed', 'DejaVu Sans', 'Liberation Sans', sans-serif" font-weight="bold" text-anchor="end" textLength="82.94" lengthAdjust="spacingAndGlyphs" >140,000</text>
<text x="174.2" y="1211" font-size="20" fill="#000" font-family="'DejaVu Sans Condensed', 'DejaVu Sans', 'Liberation Sans', sans-serif" font-weight="bold" text-anchor="end" textLength="82.94" lengthAdjust="spacingAndGlyphs" >120,000</text>
<text x="174.2" y="1269.7" font-size="20" fill="#000" font-family="'DejaVu Sans Condensed', 'DejaVu Sans', 'Liberation Sans', sans-serif" font-weight="bold" text-anchor="end" textLength="82.94" lengthAdjust="spacingAndGlyphs" >100,000</text>
<text x="174.2" y="1328.4" font-size="20" fill="#000" font-family="'DejaVu Sans Condensed', 'DejaVu Sans', 'Liberation Sans', sans-serif" font-weight="bold" text-anchor="end" textLength="70.27" lengthAdjust="spacingAndGlyphs" >80,000</text>
<text x="174.2" y="1387.1" font-size="20" fill="#000" font-family="'DejaVu Sans Condensed', 'DejaVu Sans', 'Liberation Sans', sans-serif" font-weight="bold" text-anchor="end" textLength="70.27" lengthAdjust="spacingAndGlyphs" >60,000</text>
<text x="174.2" y="1445.8" font-size="20" fill="#000" font-family="'DejaVu Sans Condensed', 'DejaVu Sans', 'Liberation Sans', sans-serif" font-weight="bold" text-anchor="end" textLength="70.27" lengthAdjust="spacingAndGlyphs" >40,000</text>
<text x="174.2" y="1504.5" font-size="20" fill="#000" font-family="'DejaVu Sans Condensed', 'DejaVu Sans', 'Liberation Sans', sans-serif" font-weight="bold" text-anchor="end" textLength="70.27" lengthAdjust="spacingAndGlyphs" >20,000</text>
<text x="162.5" y="1562.4" font-size="20" fill="#000" font-family="'DejaVu Sans Condensed', 'DejaVu Sans', 'Liberation Sans', sans-serif" font-weight="bold" text-anchor="end" >-</text>
<rect x="241.17" y="1554.2" width="140.8" height="2.1" fill="#4ab2e6" />
<text x="311.57" y="1609.6" font-size="21" fill="#000" font-family="'DejaVu Sans Condensed', 'DejaVu Sans', 'Liberation Sans', sans-serif" font-weight="bold" text-anchor="middle" textLength="50.3" lengthAdjust="spacingAndGlyphs" >2026</text>
<rect x="467.11" y="1539.1" width="140.8" height="17.2" fill="#4ab2e6" />
<text x="537.51" y="1609.6" font-size="21" fill="#000" font-family="'DejaVu Sans Condensed', 'DejaVu Sans', 'Liberation Sans', sans-serif" font-weight="bold" text-anchor="middle" textLength="50.3" lengthAdjust="spacingAndGlyphs" >2027</text>
<rect x="693.05" y="1500" width="140.8" height="56.3" fill="#4ab2e6" />
<text x="763.45" y="1609.6" font-size="21" fill="#000" font-family="'DejaVu Sans Condensed', 'DejaVu Sans', 'Liberation Sans', sans-serif" font-weight="bold" text-anchor="middle" textLength="50.3" lengthAdjust="spacingAndGlyphs" >2028</text>
<rect x="918.99" y="1413.1" width="140.8" height="143.2" fill="#4ab2e6" />
<text x="989.39" y="1609.6" font-size="21" fill="#000" font-family="'DejaVu Sans Condensed', 'DejaVu Sans', 'Liberation Sans', sans-serif" font-weight="bold" text-anchor="middle" textLength="50.3" lengthAdjust="spacingAndGlyphs" >2029</text>
<rect x="1144.93" y="1194.4" width="140.8" height="361.9" fill="#4ab2e6" />
<text x="1215.33" y="1609.6" font-size="21" fill="#000" font-family="'DejaVu Sans Condensed', 'DejaVu Sans', 'Liberation Sans', sans-serif" font-weight="bold" text-anchor="middle" textLength="50.3" lengthAdjust="spacingAndGlyphs" >2030</text>
<line x1="198" y1="1556.3" x2="1329" y2="1556.3" stroke="#3f73c4" stroke-width="2" />
<line x1="198.6" y1="1556" x2="198.6" y2="1563.2" stroke="#3f73c4" stroke-width="1.5" />
<line x1="424.54" y1="1556" x2="424.54" y2="1563.2" stroke="#3f73c4" stroke-width="1.5" />
<line x1="650.48" y1="1556" x2="650.48" y2="1563.2" stroke="#3f73c4" stroke-width="1.5" />
<line x1="876.42" y1="1556" x2="876.42" y2="1563.2" stroke="#3f73c4" stroke-width="1.5" />
<line x1="1102.36" y1="1556" x2="1102.36" y2="1563.2" stroke="#3f73c4" stroke-width="1.5" />
<line x1="1328.3" y1="1556" x2="1328.3" y2="1563.2" stroke="#3f73c4" stroke-width="1.5" />
<line x1="311.57" y1="1556" x2="311.57" y2="1560.6" stroke="#3f73c4" stroke-width="1.5" />
<line x1="537.51" y1="1556" x2="537.51" y2="1560.6" stroke="#3f73c4" stroke-width="1.5" />
<line x1="763.45" y1="1556" x2="763.45" y2="1560.6" stroke="#3f73c4" stroke-width="1.5" />
<line x1="989.39" y1="1556" x2="989.39" y2="1560.6" stroke="#3f73c4" stroke-width="1.5" />
<line x1="1215.33" y1="1556" x2="1215.33" y2="1560.6" stroke="#3f73c4" stroke-width="1.5" />
<text x="1904.3" y="1093.8" font-size="33" fill="#000" font-family="'DejaVu Sans', 'Liberation Sans', sans-serif" font-weight="bold" textLength="420.4" lengthAdjust="spacingAndGlyphs" >CASH BALANCE - $'000</text>
<line x1="1529.8" y1="1147.5" x2="2791.5" y2="1147.5" stroke="#569fcb" stroke-width="1.15" />
<line x1="1529.8" y1="1205.5" x2="2791.5" y2="1205.5" stroke="#569fcb" stroke-width="1.15" />
<line x1="1529.8" y1="1263.5" x2="2791.5" y2="1263.5" stroke="#569fcb" stroke-width="1.15" />
<line x1="1529.8" y1="1322.5" x2="2791.5" y2="1322.5" stroke="#569fcb" stroke-width="1.15" />
<line x1="1529.8" y1="1380.5" x2="2791.5" y2="1380.5" stroke="#569fcb" stroke-width="1.15" />
<line x1="1529.8" y1="1438.5" x2="2791.5" y2="1438.5" stroke="#569fcb" stroke-width="1.15" />
<line x1="1529.8" y1="1497.5" x2="2791.5" y2="1497.5" stroke="#569fcb" stroke-width="1.15" />
<text x="1506" y="1154.7" font-size="20" fill="#000" font-family="'DejaVu Sans Condensed', 'DejaVu Sans', 'Liberation Sans', sans-serif" font-weight="bold" text-anchor="end" textLength="82.94" lengthAdjust="spacingAndGlyphs" >140,000</text>
<text x="1506" y="1213" font-size="20" fill="#000" font-family="'DejaVu Sans Condensed', 'DejaVu Sans', 'Liberation Sans', sans-serif" font-weight="bold" text-anchor="end" textLength="82.94" lengthAdjust="spacingAndGlyphs" >120,000</text>
<text x="1506" y="1271.3" font-size="20" fill="#000" font-family="'DejaVu Sans Condensed', 'DejaVu Sans', 'Liberation Sans', sans-serif" font-weight="bold" text-anchor="end" textLength="82.94" lengthAdjust="spacingAndGlyphs" >100,000</text>
<text x="1506" y="1329.6" font-size="20" fill="#000" font-family="'DejaVu Sans Condensed', 'DejaVu Sans', 'Liberation Sans', sans-serif" font-weight="bold" text-anchor="end" textLength="70.27" lengthAdjust="spacingAndGlyphs" >80,000</text>
<text x="1506" y="1387.9" font-size="20" fill="#000" font-family="'DejaVu Sans Condensed', 'DejaVu Sans', 'Liberation Sans', sans-serif" font-weight="bold" text-anchor="end" textLength="70.27" lengthAdjust="spacingAndGlyphs" >60,000</text>
<text x="1506" y="1446.2" font-size="20" fill="#000" font-family="'DejaVu Sans Condensed', 'DejaVu Sans', 'Liberation Sans', sans-serif" font-weight="bold" text-anchor="end" textLength="70.27" lengthAdjust="spacingAndGlyphs" >40,000</text>
<text x="1506" y="1504.5" font-size="20" fill="#000" font-family="'DejaVu Sans Condensed', 'DejaVu Sans', 'Liberation Sans', sans-serif" font-weight="bold" text-anchor="end" textLength="70.27" lengthAdjust="spacingAndGlyphs" >20,000</text>
<text x="1494.3" y="1562.1" font-size="20" fill="#000" font-family="'DejaVu Sans Condensed', 'DejaVu Sans', 'Liberation Sans', sans-serif" font-weight="bold" text-anchor="end" >-</text>
<path d="M1529.8,1556 L1529.8,1553.1 L1551.18,1553.15 L1572.57,1553.2 L1593.95,1553.25 L1615.34,1553.3 L1636.72,1553.35 L1658.11,1553.4 L1679.49,1553.2 L1700.88,1553 L1722.26,1552.8 L1743.65,1552.6 L1765.03,1552.4 L1786.42,1552.2 L1807.8,1551.24 L1829.19,1550.28 L1850.57,1549.31 L1871.96,1548.35 L1893.34,1547.39 L1914.73,1546.18 L1936.11,1544.86 L1957.49,1543.54 L1978.88,1542.22 L2000.26,1540.9 L2021.65,1538.83 L2043.03,1536.76 L2064.42,1534.58 L2085.8,1531.37 L2107.19,1528.16 L2128.57,1524.95 L2149.96,1521.74 L2171.34,1518.53 L2192.73,1515.03 L2214.11,1511.11 L2235.5,1507.19 L2256.88,1503.27 L2278.27,1499.35 L2299.65,1494.55 L2321.04,1488.44 L2342.42,1482.32 L2363.81,1476.21 L2385.19,1470.1 L2406.57,1463.98 L2427.96,1456.91 L2449.34,1447.62 L2470.73,1438.29 L2492.11,1428.04 L2513.5,1417.8 L2534.88,1407.55 L2556.27,1397.31 L2577.65,1387.06 L2599.04,1374.88 L2620.42,1358.95 L2641.81,1343.01 L2663.19,1327.08 L2684.58,1307.6 L2705.96,1286.6 L2727.35,1265.6 L2748.73,1242.55 L2770.12,1219.28 L2791.5,1196 L2791.5,1556 Z" fill="#4ab2e6" />
<line x1="1529.3" y1="1556.2" x2="2792.2" y2="1556.2" stroke="#3f73c4" stroke-width="2" />
<line x1="1529.8" y1="1556" x2="1529.8" y2="1563.2" stroke="#3f73c4" stroke-width="1.5" />
<line x1="1551.18" y1="1556" x2="1551.18" y2="1560.4" stroke="#3f73c4" stroke-width="1.4" />
<line x1="1572.57" y1="1556" x2="1572.57" y2="1560.4" stroke="#3f73c4" stroke-width="1.4" />
<line x1="1593.95" y1="1556" x2="1593.95" y2="1563.2" stroke="#3f73c4" stroke-width="1.5" />
<line x1="1615.34" y1="1556" x2="1615.34" y2="1560.4" stroke="#3f73c4" stroke-width="1.4" />
<line x1="1636.72" y1="1556" x2="1636.72" y2="1560.4" stroke="#3f73c4" stroke-width="1.4" />
<line x1="1658.11" y1="1556" x2="1658.11" y2="1563.2" stroke="#3f73c4" stroke-width="1.5" />
<line x1="1679.49" y1="1556" x2="1679.49" y2="1560.4" stroke="#3f73c4" stroke-width="1.4" />
<line x1="1700.88" y1="1556" x2="1700.88" y2="1560.4" stroke="#3f73c4" stroke-width="1.4" />
<line x1="1722.26" y1="1556" x2="1722.26" y2="1563.2" stroke="#3f73c4" stroke-width="1.5" />
<line x1="1743.65" y1="1556" x2="1743.65" y2="1560.4" stroke="#3f73c4" stroke-width="1.4" />
<line x1="1765.03" y1="1556" x2="1765.03" y2="1560.4" stroke="#3f73c4" stroke-width="1.4" />
<line x1="1786.42" y1="1556" x2="1786.42" y2="1563.2" stroke="#3f73c4" stroke-width="1.5" />
<line x1="1807.8" y1="1556" x2="1807.8" y2="1560.4" stroke="#3f73c4" stroke-width="1.4" />
<line x1="1829.19" y1="1556" x2="1829.19" y2="1560.4" stroke="#3f73c4" stroke-width="1.4" />
<line x1="1850.57" y1="1556" x2="1850.57" y2="1563.2" stroke="#3f73c4" stroke-width="1.5" />
<line x1="1871.96" y1="1556" x2="1871.96" y2="1560.4" stroke="#3f73c4" stroke-width="1.4" />
<line x1="1893.34" y1="1556" x2="1893.34" y2="1560.4" stroke="#3f73c4" stroke-width="1.4" />
<line x1="1914.73" y1="1556" x2="1914.73" y2="1563.2" stroke="#3f73c4" stroke-width="1.5" />
<line x1="1936.11" y1="1556" x2="1936.11" y2="1560.4" stroke="#3f73c4" stroke-width="1.4" />
<line x1="1957.49" y1="1556" x2="1957.49" y2="1560.4" stroke="#3f73c4" stroke-width="1.4" />
<line x1="1978.88" y1="1556" x2="1978.88" y2="1563.2" stroke="#3f73c4" stroke-width="1.5" />
<line x1="2000.26" y1="1556" x2="2000.26" y2="1560.4" stroke="#3f73c4" stroke-width="1.4" />
<line x1="2021.65" y1="1556" x2="2021.65" y2="1560.4" stroke="#3f73c4" stroke-width="1.4" />
<line x1="2043.03" y1="1556" x2="2043.03" y2="1563.2" stroke="#3f73c4" stroke-width="1.5" />
<line x1="2064.42" y1="1556" x2="2064.42" y2="1560.4" stroke="#3f73c4" stroke-width="1.4" />
<line x1="2085.8" y1="1556" x2="2085.8" y2="1560.4" stroke="#3f73c4" stroke-width="1.4" />
<line x1="2107.19" y1="1556" x2="2107.19" y2="1563.2" stroke="#3f73c4" stroke-width="1.5" />
<line x1="2128.57" y1="1556" x2="2128.57" y2="1560.4" stroke="#3f73c4" stroke-width="1.4" />
<line x1="2149.96" y1="1556" x2="2149.96" y2="1560.4" stroke="#3f73c4" stroke-width="1.4" />
<line x1="2171.34" y1="1556" x2="2171.34" y2="1563.2" stroke="#3f73c4" stroke-width="1.5" />
<line x1="2192.73" y1="1556" x2="2192.73" y2="1560.4" stroke="#3f73c4" stroke-width="1.4" />
<line x1="2214.11" y1="1556" x2="2214.11" y2="1560.4" stroke="#3f73c4" stroke-width="1.4" />
<line x1="2235.5" y1="1556" x2="2235.5" y2="1563.2" stroke="#3f73c4" stroke-width="1.5" />
<line x1="2256.88" y1="1556" x2="2256.88" y2="1560.4" stroke="#3f73c4" stroke-width="1.4" />
<line x1="2278.27" y1="1556" x2="2278.27" y2="1560.4" stroke="#3f73c4" stroke-width="1.4" />
<line x1="2299.65" y1="1556" x2="2299.65" y2="1563.2" stroke="#3f73c4" stroke-width="1.5" />
<line x1="2321.04" y1="1556" x2="2321.04" y2="1560.4" stroke="#3f73c4" stroke-width="1.4" />
<line x1="2342.42" y1="1556" x2="2342.42" y2="1560.4" stroke="#3f73c4" stroke-width="1.4" />
<line x1="2363.81" y1="1556" x2="2363.81" y2="1563.2" stroke="#3f73c4" stroke-width="1.5" />
<line x1="2385.19" y1="1556" x2="2385.19" y2="1560.4" stroke="#3f73c4" stroke-width="1.4" />
<line x1="2406.57" y1="1556" x2="2406.57" y2="1560.4" stroke="#3f73c4" stroke-width="1.4" />
<line x1="2427.96" y1="1556" x2="2427.96" y2="1563.2" stroke="#3f73c4" stroke-width="1.5" />
<line x1="2449.34" y1="1556" x2="2449.34" y2="1560.4" stroke="#3f73c4" stroke-width="1.4" />
<line x1="2470.73" y1="1556" x2="2470.73" y2="1560.4" stroke="#3f73c4" stroke-width="1.4" />
<line x1="2492.11" y1="1556" x2="2492.11" y2="1563.2" stroke="#3f73c4" stroke-width="1.5" />
<line x1="2513.5" y1="1556" x2="2513.5" y2="1560.4" stroke="#3f73c4" stroke-width="1.4" />
<line x1="2534.88" y1="1556" x2="2534.88" y2="1560.4" stroke="#3f73c4" stroke-width="1.4" />
<line x1="2556.27" y1="1556" x2="2556.27" y2="1563.2" stroke="#3f73c4" stroke-width="1.5" />
<line x1="2577.65" y1="1556" x2="2577.65" y2="1560.4" stroke="#3f73c4" stroke-width="1.4" />
<line x1="2599.04" y1="1556" x2="2599.04" y2="1560.4" stroke="#3f73c4" stroke-width="1.4" />
<line x1="2620.42" y1="1556" x2="2620.42" y2="1563.2" stroke="#3f73c4" stroke-width="1.5" />
<line x1="2641.81" y1="1556" x2="2641.81" y2="1560.4" stroke="#3f73c4" stroke-width="1.4" />
<line x1="2663.19" y1="1556" x2="2663.19" y2="1560.4" stroke="#3f73c4" stroke-width="1.4" />
<line x1="2684.58" y1="1556" x2="2684.58" y2="1563.2" stroke="#3f73c4" stroke-width="1.5" />
<line x1="2705.96" y1="1556" x2="2705.96" y2="1560.4" stroke="#3f73c4" stroke-width="1.4" />
<line x1="2727.35" y1="1556" x2="2727.35" y2="1560.4" stroke="#3f73c4" stroke-width="1.4" />
<line x1="2748.73" y1="1556" x2="2748.73" y2="1563.2" stroke="#3f73c4" stroke-width="1.5" />
<line x1="2770.12" y1="1556" x2="2770.12" y2="1560.4" stroke="#3f73c4" stroke-width="1.4" />
<line x1="2791.5" y1="1556" x2="2791.5" y2="1560.4" stroke="#3f73c4" stroke-width="1.4" />
<text transform="translate(1535.1,1583.5) rotate(-45)" font-size="20" fill="#000" font-family="'DejaVu Sans Condensed', 'DejaVu Sans', 'Liberation Sans', sans-serif" text-anchor="end">Jan-26</text>
<text transform="translate(1599.25,1583.5) rotate(-45)" font-size="20" fill="#000" font-family="'DejaVu Sans Condensed', 'DejaVu Sans', 'Liberation Sans', sans-serif" text-anchor="end">Apr-26</text>
<text transform="translate(1663.41,1583.5) rotate(-45)" font-size="20" fill="#000" font-family="'DejaVu Sans Condensed', 'DejaVu Sans', 'Liberation Sans', sans-serif" text-anchor="end">Jul-26</text>
<text transform="translate(1727.56,1583.5) rotate(-45)" font-size="20" fill="#000" font-family="'DejaVu Sans Condensed', 'DejaVu Sans', 'Liberation Sans', sans-serif" text-anchor="end">Oct-26</text>
<text transform="translate(1791.72,1583.5) rotate(-45)" font-size="20" fill="#000" font-family="'DejaVu Sans Condensed', 'DejaVu Sans', 'Liberation Sans', sans-serif" text-anchor="end">Jan-27</text>
<text transform="translate(1855.87,1583.5) rotate(-45)" font-size="20" fill="#000" font-family="'DejaVu Sans Condensed', 'DejaVu Sans', 'Liberation Sans', sans-serif" text-anchor="end">Apr-27</text>
<text transform="translate(1920.03,1583.5) rotate(-45)" font-size="20" fill="#000" font-family="'DejaVu Sans Condensed', 'DejaVu Sans', 'Liberation Sans', sans-serif" text-anchor="end">Jul-27</text>
<text transform="translate(1984.18,1583.5) rotate(-45)" font-size="20" fill="#000" font-family="'DejaVu Sans Condensed', 'DejaVu Sans', 'Liberation Sans', sans-serif" text-anchor="end">Oct-27</text>
<text transform="translate(2048.33,1583.5) rotate(-45)" font-size="20" fill="#000" font-family="'DejaVu Sans Condensed', 'DejaVu Sans', 'Liberation Sans', sans-serif" text-anchor="end">Jan-28</text>
<text transform="translate(2112.49,1583.5) rotate(-45)" font-size="20" fill="#000" font-family="'DejaVu Sans Condensed', 'DejaVu Sans', 'Liberation Sans', sans-serif" text-anchor="end">Apr-28</text>
<text transform="translate(2176.64,1583.5) rotate(-45)" font-size="20" fill="#000" font-family="'DejaVu Sans Condensed', 'DejaVu Sans', 'Liberation Sans', sans-serif" text-anchor="end">Jul-28</text>
<text transform="translate(2240.8,1583.5) rotate(-45)" font-size="20" fill="#000" font-family="'DejaVu Sans Condensed', 'DejaVu Sans', 'Liberation Sans', sans-serif" text-anchor="end">Oct-28</text>
<text transform="translate(2304.95,1583.5) rotate(-45)" font-size="20" fill="#000" font-family="'DejaVu Sans Condensed', 'DejaVu Sans', 'Liberation Sans', sans-serif" text-anchor="end">Jan-29</text>
<text transform="translate(2369.11,1583.5) rotate(-45)" font-size="20" fill="#000" font-family="'DejaVu Sans Condensed', 'DejaVu Sans', 'Liberation Sans', sans-serif" text-anchor="end">Apr-29</text>
<text transform="translate(2433.26,1583.5) rotate(-45)" font-size="20" fill="#000" font-family="'DejaVu Sans Condensed', 'DejaVu Sans', 'Liberation Sans', sans-serif" text-anchor="end">Jul-29</text>
<text transform="translate(2497.41,1583.5) rotate(-45)" font-size="20" fill="#000" font-family="'DejaVu Sans Condensed', 'DejaVu Sans', 'Liberation Sans', sans-serif" text-anchor="end">Oct-29</text>
<text transform="translate(2561.57,1583.5) rotate(-45)" font-size="20" fill="#000" font-family="'DejaVu Sans Condensed', 'DejaVu Sans', 'Liberation Sans', sans-serif" text-anchor="end">Jan-30</text>
<text transform="translate(2625.72,1583.5) rotate(-45)" font-size="20" fill="#000" font-family="'DejaVu Sans Condensed', 'DejaVu Sans', 'Liberation Sans', sans-serif" text-anchor="end">Apr-30</text>
<text transform="translate(2689.88,1583.5) rotate(-45)" font-size="20" fill="#000" font-family="'DejaVu Sans Condensed', 'DejaVu Sans', 'Liberation Sans', sans-serif" text-anchor="end">Jul-30</text>
<text transform="translate(2754.03,1583.5) rotate(-45)" font-size="20" fill="#000" font-family="'DejaVu Sans Condensed', 'DejaVu Sans', 'Liberation Sans', sans-serif" text-anchor="end">Oct-30</text>
<defs><clipPath id="botclip"><rect x="47" y="1654" width="2813" height="16"/></clipPath></defs>
<g clip-path="url(#botclip)">
<text x="1825" y="1693.3" font-size="33" fill="#000" font-family="'DejaVu Sans', 'Liberation Sans', sans-serif" font-weight="bold" textLength="559" lengthAdjust="spacingAndGlyphs" >OPERATING CASH FLOW - $'000</text>
<text x="800.2" y="1696.4" font-size="33" fill="#000" font-family="'DejaVu Sans', 'Liberation Sans', sans-serif" font-weight="bold" text-anchor="end" >PROFITABILITY - </text>
<text x="800.2" y="1693.2" font-size="33" fill="#000" font-family="'DejaVu Sans', 'Liberation Sans', sans-serif" font-weight="bold" >$'</text>
<text x="833.3" y="1696.4" font-size="33" fill="#000" font-family="'DejaVu Sans', 'Liberation Sans', sans-serif" font-weight="bold" >000</text>
</g>
</g>
<g id="bottom">
<rect x="2860.5" y="278.6" width="30.5" height="1391.4" fill="#121212" />
<rect x="2870" y="304.5" width="12" height="657" fill="#9e9e9e" rx="6" />
<path d="M2870.5 297 L2876 288.5 L2881.5 297 Z" fill="#9e9e9e" stroke="#9e9e9e" stroke-width="1.5" stroke-linejoin="round"/>
<path d="M2870.5 1654.5 L2876 1663 L2881.5 1654.5 Z" fill="#9e9e9e" stroke="#9e9e9e" stroke-width="1.5" stroke-linejoin="round"/>
<rect x="11" y="1670" width="2880" height="48" fill="#0a0a0a" />
<path d="M53.5 1686 L47 1692.5 L53.5 1699" fill="none" stroke="#9a9a9a" stroke-width="1.9" stroke-linecap="round" stroke-linejoin="round"/>
<path d="M96.5 1686 L103 1692.5 L96.5 1699" fill="none" stroke="#e0e0e0" stroke-width="1.9" stroke-linecap="round" stroke-linejoin="round"/>
<text x="190" y="1702.8" font-size="20.5" fill="#fff" font-family="'Liberation Sans', sans-serif" textLength="82.7" lengthAdjust="spacingAndGlyphs" >Contents</text>
<line x1="292.6" y1="1680.5" x2="292.6" y2="1707.5" stroke="#444" stroke-width="1.2" />
<rect x="299.1" y="1676.3" width="127.8" height="35.3" fill="#fdf06d" rx="6.5" />
<text x="363" y="1702.8" font-size="20.5" fill="#161616" font-family="'Liberation Sans', sans-serif" text-anchor="middle" textLength="100.7" lengthAdjust="spacingAndGlyphs" >Dashboard</text>
<line x1="433.4" y1="1680.5" x2="433.4" y2="1707.5" stroke="#444" stroke-width="1.2" />
<rect x="440" y="1676.3" width="105.9" height="35.3" fill="#fdf06d" rx="6.5" />
<text x="492.95" y="1702.8" font-size="20.5" fill="#161616" font-family="'Liberation Sans', sans-serif" text-anchor="middle" textLength="78.5" lengthAdjust="spacingAndGlyphs" >Revenue</text>
<line x1="552.4" y1="1680.5" x2="552.4" y2="1707.5" stroke="#444" stroke-width="1.2" />
<rect x="558.8" y="1676.3" width="158.3" height="35.3" fill="#fdf06d" rx="6.5" />
<text x="637.95" y="1702.8" font-size="20.5" fill="#161616" font-family="'Liberation Sans', sans-serif" text-anchor="middle" textLength="133.5" lengthAdjust="spacingAndGlyphs" >COGS &amp; OPEX</text>
<line x1="723.6" y1="1680.5" x2="723.6" y2="1707.5" stroke="#444" stroke-width="1.2" />
<rect x="729.7" y="1676.3" width="89.3" height="35.3" fill="#fdf06d" rx="6.5" />
<text x="774.35" y="1702.8" font-size="20.5" fill="#161616" font-family="'Liberation Sans', sans-serif" text-anchor="middle" textLength="62" lengthAdjust="spacingAndGlyphs" >Payroll</text>
<line x1="825.5" y1="1680.5" x2="825.5" y2="1707.5" stroke="#444" stroke-width="1.2" />
<rect x="832" y="1676.3" width="86.8" height="35.3" fill="#fdf06d" rx="6.5" />
<text x="875.4" y="1702.8" font-size="20.5" fill="#161616" font-family="'Liberation Sans', sans-serif" text-anchor="middle" textLength="61.3" lengthAdjust="spacingAndGlyphs" >CAPEX</text>
<line x1="925.3" y1="1680.5" x2="925.3" y2="1707.5" stroke="#444" stroke-width="1.2" />
<rect x="931.8" y="1676.3" width="112.8" height="35.3" fill="#fdf06d" rx="6.5" />
<text x="988.2" y="1702.8" font-size="20.5" fill="#161616" font-family="'Liberation Sans', sans-serif" text-anchor="middle" textLength="86" lengthAdjust="spacingAndGlyphs" >CapTable</text>
<line x1="1051.1" y1="1680.5" x2="1051.1" y2="1707.5" stroke="#444" stroke-width="1.2" />
<rect x="1058" y="1676.3" width="90.1" height="35.3" fill="#fdf06d" rx="6.5" />
<text x="1103.05" y="1702.8" font-size="20.5" fill="#161616" font-family="'Liberation Sans', sans-serif" text-anchor="middle" textLength="64" lengthAdjust="spacingAndGlyphs" >Capital</text>
<line x1="1154.6" y1="1680.5" x2="1154.6" y2="1707.5" stroke="#444" stroke-width="1.2" />
<rect x="1161.1" y="1676.3" width="41.8" height="35.3" fill="#4ab0e8" rx="6.5" />
<text x="1182" y="1702.8" font-size="20.5" fill="#161616" font-family="'Liberation Sans', sans-serif" text-anchor="middle" textLength="15.5" lengthAdjust="spacingAndGlyphs" >IS</text>
<line x1="1209.4" y1="1680.5" x2="1209.4" y2="1707.5" stroke="#444" stroke-width="1.2" />
<rect x="1215.9" y="1676.3" width="48.3" height="35.3" fill="#4ab0e8" rx="6.5" />
<text x="1240.05" y="1702.8" font-size="20.5" fill="#161616" font-family="'Liberation Sans', sans-serif" text-anchor="middle" textLength="23.5" lengthAdjust="spacingAndGlyphs" >CF</text>
<line x1="1270.7" y1="1680.5" x2="1270.7" y2="1707.5" stroke="#444" stroke-width="1.2" />
<rect x="1276.8" y="1676.3" width="48.2" height="35.3" fill="#4ab0e8" rx="6.5" />
<text x="1300.9" y="1702.8" font-size="20.5" fill="#161616" font-family="'Liberation Sans', sans-serif" text-anchor="middle" textLength="22.5" lengthAdjust="spacingAndGlyphs" >BS</text>
<line x1="1331.5" y1="1680.5" x2="1331.5" y2="1707.5" stroke="#444" stroke-width="1.2" />
<rect x="1337.7" y="1676.3" width="115.2" height="35.3" fill="#4ab0e8" rx="6.5" />
<text x="1395.3" y="1702.8" font-size="20.5" fill="#161616" font-family="'Liberation Sans', sans-serif" text-anchor="middle" textLength="87.5" lengthAdjust="spacingAndGlyphs" >Scenarios</text>
<line x1="1459.4" y1="1680.5" x2="1459.4" y2="1707.5" stroke="#444" stroke-width="1.2" />
<rect x="1465.9" y="1676.3" width="115.3" height="35.3" fill="#4ab0e8" rx="6.5" />
<text x="1523.55" y="1702.8" font-size="20.5" fill="#161616" font-family="'Liberation Sans', sans-serif" text-anchor="middle" textLength="87.5" lengthAdjust="spacingAndGlyphs" >Valuation</text>
<line x1="1587.7" y1="1680.5" x2="1587.7" y2="1707.5" stroke="#444" stroke-width="1.2" />
<rect x="1593.8" y="1676.3" width="114.4" height="35.3" fill="#4ab0e8" rx="6.5" />
<text x="1651" y="1702.8" font-size="20.5" fill="#161616" font-family="'Liberation Sans', sans-serif" text-anchor="middle" textLength="87" lengthAdjust="spacingAndGlyphs" >Summary</text>
<line x1="1714.7" y1="1680.5" x2="1714.7" y2="1707.5" stroke="#444" stroke-width="1.2" />
<rect x="1721.2" y="1676.3" width="47.8" height="35.3" fill="#4ab0e8" rx="6.5" />
<text x="1745.1" y="1702.8" font-size="20.5" fill="#161616" font-family="'Liberation Sans', sans-serif" text-anchor="middle" textLength="22.5" lengthAdjust="spacingAndGlyphs" >BE</text>
<line x1="1775.5" y1="1680.5" x2="1775.5" y2="1707.5" stroke="#444" stroke-width="1.2" />
<rect x="1781.7" y="1676.3" width="72.6" height="35.3" fill="#4ab0e8" rx="6.5" />
<text x="1818" y="1702.8" font-size="20.5" fill="#161616" font-family="'Liberation Sans', sans-serif" text-anchor="middle" textLength="46" lengthAdjust="spacingAndGlyphs" >ROIC</text>
<line x1="1860.8" y1="1680.5" x2="1860.8" y2="1707.5" stroke="#444" stroke-width="1.2" />
<rect x="1965.1" y="1676.3" width="63.8" height="35.3" fill="#4ab0e8" rx="6.5" />
<text x="1997" y="1702.8" font-size="20.5" fill="#161616" font-family="'Liberation Sans', sans-serif" text-anchor="middle" textLength="38" lengthAdjust="spacingAndGlyphs" >KPIs</text>
<line x1="2035.4" y1="1680.5" x2="2035.4" y2="1707.5" stroke="#444" stroke-width="1.2" />
<line x1="1958.3" y1="1680.5" x2="1958.3" y2="1707.5" stroke="#444" stroke-width="1.2" />
<defs><linearGradient id="actg" x1="0" y1="0" x2="0" y2="1"><stop offset="0" stop-color="#ffffff"/><stop offset="0.35" stop-color="#f4f9fd"/><stop offset="1" stop-color="#c9e2f5"/></linearGradient></defs>
<path d="M1867 1669.5 H1951.8 V1705 Q1951.8 1711.6 1945.2 1711.6 H1873.6 Q1867 1711.6 1867 1705 Z" fill="url(#actg)" />
<path d="M1861 1670 Q1867 1670 1867 1676 V1670 Z M1957.8 1670 Q1951.8 1670 1951.8 1676 V1670 Z" fill="#fff" />
<text x="1909.4" y="1697.5" font-size="20.5" fill="#1c1c1c" font-family="'Liberation Sans', sans-serif" text-anchor="middle" textLength="60.2" lengthAdjust="spacingAndGlyphs" stroke="#1c1c1c" stroke-width="0.5">Charts</text>
<rect x="1879.3" y="1704.9" width="60.2" height="2.7" fill="#1f7a48" rx="1.2" />
<defs><clipPath id="sccl"><rect x="2041.9" y="1674" width="30.3" height="40"/></clipPath></defs>
<g clip-path="url(#sccl)">
<rect x="2041.9" y="1676.3" width="115" height="35.3" fill="#4ab0e8" rx="6.5" />
<text x="2054" y="1702.8" font-size="20.5" fill="#161616" font-family="'Liberation Sans', sans-serif" >Scenarios</text>
</g>
<circle cx="2089" cy="1693" r="2.2" fill="#ececec"/>
<circle cx="2095.2" cy="1693" r="2.2" fill="#ececec"/>
<circle cx="2101.4" cy="1693" r="2.2" fill="#ececec"/>
<path d="M2135 1692.8 H2151.4 M2143.2 1684.6 V1701" fill="none" stroke="#ececec" stroke-width="1.8" />
<rect x="2190.4" y="1686.9" width="3.2" height="3.2" fill="#ececec" rx="0.6" />
<rect x="2190.4" y="1692.9" width="3.2" height="3.2" fill="#ececec" rx="0.6" />
<rect x="2190.4" y="1698.9" width="3.2" height="3.2" fill="#ececec" rx="0.6" />
<rect x="2216.4" y="1680.8" width="644" height="25.4" fill="#181818" rx="12.7" />
<path d="M2233.5 1686.8 L2225 1693.4 L2233.5 1700 Z" fill="#9e9e9e" stroke="#9e9e9e" stroke-width="1.5" stroke-linejoin="round"/>
<path d="M2842.5 1686.8 L2851 1693.4 L2842.5 1700 Z" fill="#9e9e9e" stroke="#9e9e9e" stroke-width="1.5" stroke-linejoin="round"/>
<rect x="2241.6" y="1687" width="561.2" height="12.9" fill="#9e9e9e" rx="6.4" />
<rect x="11" y="1718" width="2880" height="33" fill="#141414" />
<line x1="11" y1="1717.8" x2="2891" y2="1717.8" stroke="#343434" stroke-width="1.1" />
<text x="27.2" y="1740.8" font-size="15.3" fill="#f0f0f0" font-family="'Liberation Sans', sans-serif" textLength="42.6" lengthAdjust="spacingAndGlyphs" >Ready</text>
<path d="M100 1727.5 H120.5 M100 1727.5 V1744 H106 M120.5 1727.5 V1731 M100 1731.5 H120.5 M103 1735.5 H108 M103 1739.5 H106" fill="none" stroke="#e6e6e6" stroke-width="1.4" />
<circle cx="114.5" cy="1738.5" r="6" fill="none" stroke="#e6e6e6" stroke-width="1.4"/><circle cx="114.5" cy="1738.5" r="2.6" fill="#e6e6e6"/>
<circle cx="156" cy="1727.5" r="2.4" fill="none" stroke="#e6e6e6" stroke-width="1.3"/>
<path d="M147 1731.5 Q156 1735.5 165 1731.5 M153.3 1734 V1739 L149 1746.5 M158.7 1734 V1739 L160.5 1742" fill="none" stroke="#e6e6e6" stroke-width="1.4" stroke-linecap="round" stroke-linejoin="round"/>
<path d="M158.5 1739.5 L166.5 1747.5 M166.5 1739.5 L158.5 1747.5" fill="none" stroke="#e6e6e6" stroke-width="1.5" stroke-linecap="round"/>
<text x="173.3" y="1740.8" font-size="15.3" fill="#fff" font-family="'Liberation Sans', sans-serif" font-weight="bold" textLength="187.1" lengthAdjust="spacingAndGlyphs" >Accessibility: Investigate</text>
<rect x="2445" y="1718" width="59.7" height="33" fill="#262626" />
<path d="M2464.5 1725.5 h20 v19 h-20 Z M2464.5 1731.8 h20 M2464.5 1738.1 h20 M2471.2 1725.5 v19 M2477.9 1725.5 v19" fill="none" stroke="#f0f0f0" stroke-width="1.5" />
<path d="M2525 1725.5 h20.5 v19 h-20.5 Z M2529 1729.5 h12.5 v11 h-12.5 Z M2531.5 1733 h7.5 M2531.5 1735.8 h7.5 M2531.5 1738.3 h7.5" fill="none" stroke="#f0f0f0" stroke-width="1.4" />
<path d="M2584.8 1725.5 h20.5 v19 h-20.5 Z M2590.5 1725.5 v8.5 h10 v-8.5 M2584.8 1734 h5.7" fill="none" stroke="#f0f0f0" stroke-width="1.5" />
<line x1="2633" y1="1735" x2="2643" y2="1735" stroke="#e6e6e6" stroke-width="1.3" />
<line x1="2653" y1="1735" x2="2800.8" y2="1735" stroke="#cfcfcf" stroke-width="1.2" />
<rect x="2725.5" y="1726.4" width="8.2" height="17" fill="#9e9e9e" rx="1.5" />
<path d="M2809.6 1735 H2819.6 M2814.6 1730 V1740" fill="none" stroke="#e6e6e6" stroke-width="1.3" />
<text x="2840.2" y="1740.8" font-size="15.3" fill="#f0f0f0" font-family="'Liberation Sans', sans-serif" textLength="38.7" lengthAdjust="spacingAndGlyphs" >110%</text>
</g>
</svg>
</body></html>
